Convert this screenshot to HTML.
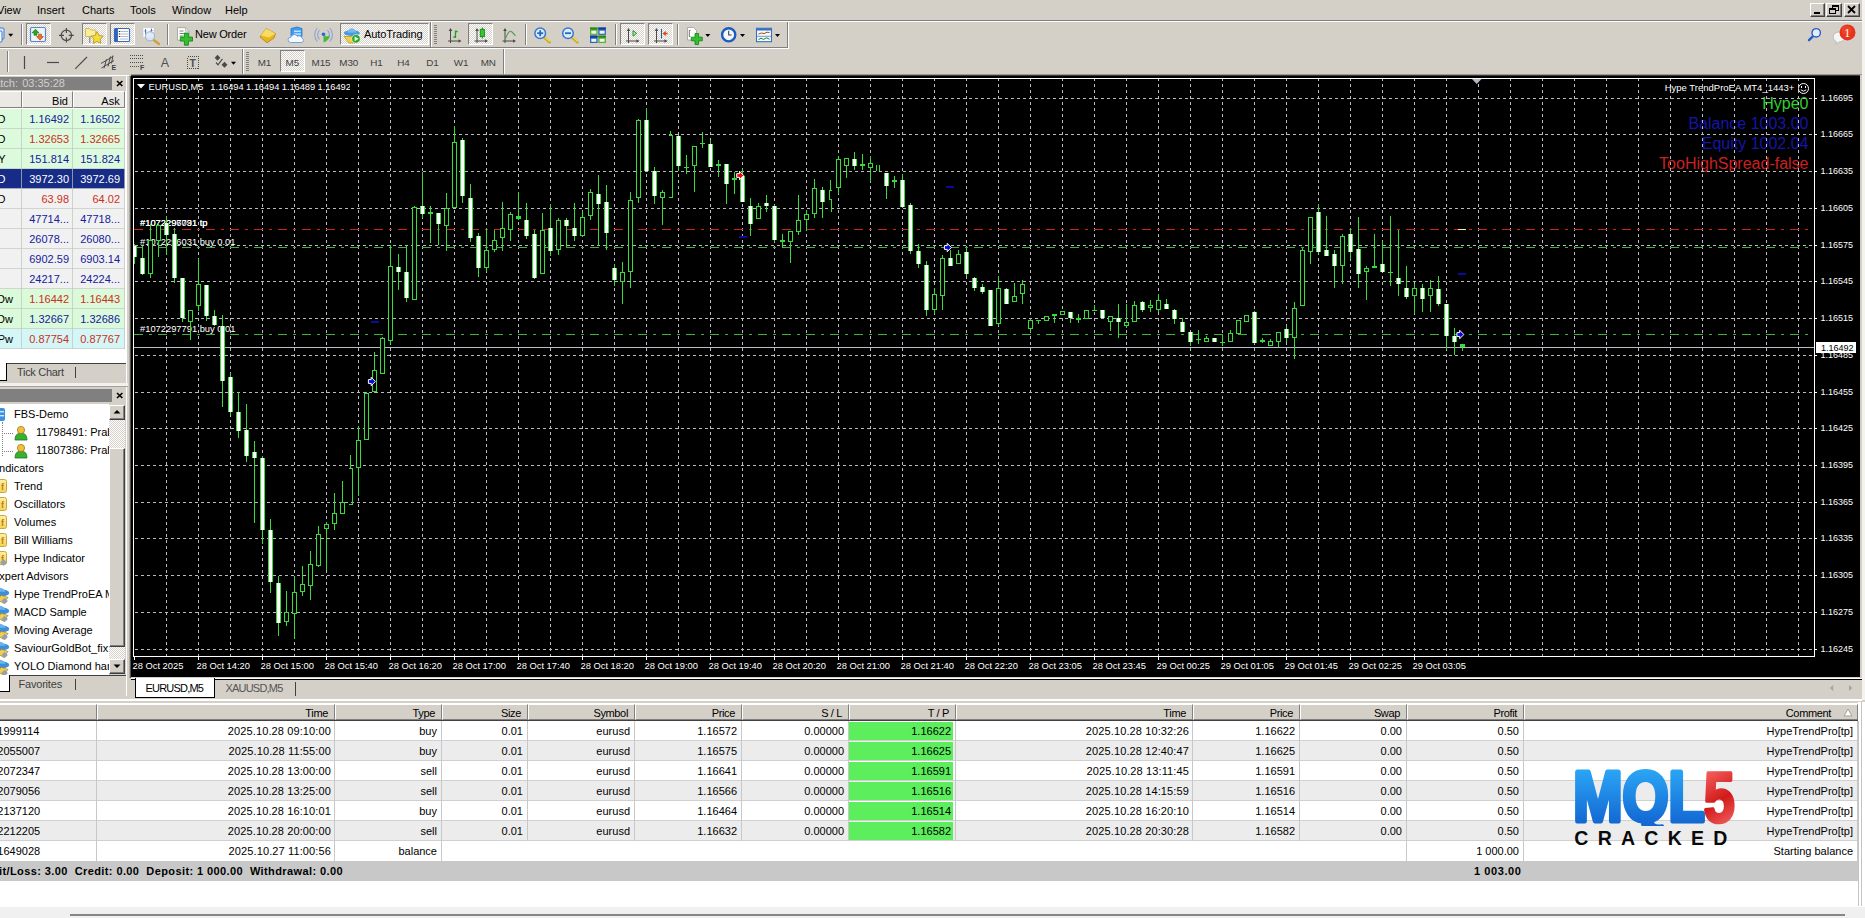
<!DOCTYPE html><html><head><meta charset="utf-8"><title>MetaTrader 4</title><style>

html,body{margin:0;padding:0}
body{width:1865px;height:918px;overflow:hidden;background:#d4d0c8;position:relative;font-family:"Liberation Sans","DejaVu Sans",sans-serif;font-size:11px;color:#000;line-height:13px}
.a{position:absolute}
.t{position:absolute;white-space:pre;line-height:13px;height:13px}
.r{text-align:right}
.vsep{position:absolute;width:1px;background:#808080;box-shadow:1px 0 0 #fff}
.pressed{position:absolute;box-sizing:border-box;border:1px solid;border-color:#808080 #fff #fff #808080;background-color:#d6d2ca;background-image:linear-gradient(45deg,#fff 25%,transparent 25%,transparent 75%,#fff 75%),linear-gradient(45deg,#fff 25%,transparent 25%,transparent 75%,#fff 75%);background-size:2px 2px;background-position:0 0,1px 1px}
.hdr{position:absolute;box-sizing:border-box;background:#ebe9e4;border:1px solid;border-color:#fff #808080 #808080 #fff;height:17px}
.grip{position:absolute;width:3px;border-left:1px dotted #808080;border-right:1px dotted #808080;box-sizing:border-box}
svg{position:absolute;overflow:visible}

</style></head><body>
<div class="a" style="left:0;top:0;width:1865px;height:20px;background:#d4d0c8"></div>
<div class="t" style="left:-3px;top:4px;">View</div>
<div class="t" style="left:37px;top:4px;">Insert</div>
<div class="t" style="left:82px;top:4px;">Charts</div>
<div class="t" style="left:130px;top:4px;">Tools</div>
<div class="t" style="left:172px;top:4px;">Window</div>
<div class="t" style="left:225px;top:4px;">Help</div>
<div class="a" style="left:0;top:20px;width:1862px;height:1px;background:#808080"></div>
<div class="a" style="left:0;top:21px;width:1862px;height:1px;background:#fff"></div>
<div class="a" style="left:1862px;top:0;width:3px;height:700px;background:#f4f3ef"></div>
<div class="a" style="left:1810px;top:3px;width:15px;height:14px;box-sizing:border-box;background:#d4d0c8;border:1px solid;border-color:#fff #404040 #404040 #fff;box-shadow:inset -1px -1px 0 #808080"></div>
<div class="a" style="left:1826px;top:3px;width:16px;height:14px;box-sizing:border-box;background:#d4d0c8;border:1px solid;border-color:#fff #404040 #404040 #fff;box-shadow:inset -1px -1px 0 #808080"></div>
<div class="a" style="left:1844px;top:3px;width:16px;height:14px;box-sizing:border-box;background:#d4d0c8;border:1px solid;border-color:#fff #404040 #404040 #fff;box-shadow:inset -1px -1px 0 #808080"></div>
<svg style="left:1810px;top:3px" width="50" height="14" viewBox="0 0 50 14"><rect x="4" y="9" width="6" height="2" fill="#000"/><rect x="22.5" y="2.5" width="6" height="5" fill="none" stroke="#000"/><rect x="22" y="2" width="7" height="2" fill="#000"/><rect x="19.5" y="5.5" width="6" height="5" fill="#d4d0c8" stroke="#000"/><rect x="19" y="5" width="7" height="2" fill="#000"/><path d="M38 3 L45 10 M45 3 L38 10" stroke="#000" stroke-width="1.8" fill="none"/></svg>
<div class="a" style="left:0;top:47px;width:788px;height:1px;background:#808080"></div>
<div class="a" style="left:0;top:48px;width:789px;height:1px;background:#fff"></div>
<div class="a" style="left:787px;top:22px;width:1px;height:26px;background:#808080"></div>
<div class="a" style="left:788px;top:22px;width:1px;height:27px;background:#fff"></div>
<div class="a" style="left:430px;top:22px;width:1px;height:25px;background:#808080"></div><div class="a" style="left:431px;top:22px;width:1px;height:25px;background:#fff"></div>
<div class="a" style="left:242px;top:49px;width:1px;height:25px;background:#808080"></div><div class="a" style="left:243px;top:49px;width:1px;height:25px;background:#fff"></div>
<div class="a" style="left:503px;top:49px;width:1px;height:25px;background:#808080"></div><div class="a" style="left:504px;top:49px;width:1px;height:25px;background:#fff"></div>
<div class="vsep" style="left:21px;top:24px;height:21px"></div>
<div class="vsep" style="left:167px;top:24px;height:21px"></div>
<div class="vsep" style="left:525px;top:24px;height:21px"></div>
<div class="vsep" style="left:615px;top:24px;height:21px"></div>
<div class="vsep" style="left:677px;top:24px;height:21px"></div>
<div class="vsep" style="left:7px;top:51px;height:21px"></div>
<div class="a" style="left:434px;top:25px;width:3px;height:19px;background:repeating-linear-gradient(#808080 0 1px,transparent 1px 2px)"></div>
<div class="a" style="left:246px;top:52px;width:3px;height:19px;background:repeating-linear-gradient(#808080 0 1px,transparent 1px 2px)"></div>
<div class="pressed" style="left:26px;top:23px;width:25px;height:22px"></div>
<div class="pressed" style="left:82px;top:23px;width:25px;height:22px"></div>
<div class="pressed" style="left:110px;top:23px;width:25px;height:22px"></div>
<div class="pressed" style="left:340px;top:23px;width:89px;height:22px"></div>
<div class="pressed" style="left:468px;top:23px;width:25px;height:22px"></div>
<div class="pressed" style="left:620px;top:23px;width:25px;height:22px"></div>
<div class="pressed" style="left:648px;top:23px;width:25px;height:22px"></div>
<div class="pressed" style="left:280px;top:50px;width:25px;height:22px"></div>
<div class="t" style="left:195px;top:28px;letter-spacing:-.2px">New Order</div>
<div class="t" style="left:364px;top:28px;letter-spacing:-.1px">AutoTrading</div>
<div class="t" style="left:257.7px;top:56.3px;color:#404040;font-size:9.9px;letter-spacing:-.1px">M1</div>
<div class="t" style="left:285.5px;top:56.3px;color:#404040;font-size:9.9px;letter-spacing:-.1px">M5</div>
<div class="t" style="left:311.5px;top:56.3px;color:#404040;font-size:9.9px;letter-spacing:-.1px">M15</div>
<div class="t" style="left:339.3px;top:56.3px;color:#404040;font-size:9.9px;letter-spacing:-.1px">M30</div>
<div class="t" style="left:370.2px;top:56.3px;color:#404040;font-size:9.9px;letter-spacing:-.1px">H1</div>
<div class="t" style="left:397.2px;top:56.3px;color:#404040;font-size:9.9px;letter-spacing:-.1px">H4</div>
<div class="t" style="left:426.3px;top:56.3px;color:#404040;font-size:9.9px;letter-spacing:-.1px">D1</div>
<div class="t" style="left:453.8px;top:56.3px;color:#404040;font-size:9.9px;letter-spacing:-.1px">W1</div>
<div class="t" style="left:480.7px;top:56.3px;color:#404040;font-size:9.9px;letter-spacing:-.1px">MN</div>
<svg style="left:0;top:0" width="800" height="76" viewBox="0 0 800 76"><rect x="-4" y="28" width="8" height="11" rx="1" fill="#dce9fb" stroke="#3c78c8"/><rect x="-6" y="31" width="8" height="11" rx="1" fill="#f4f8ff" stroke="#3c78c8"/><path d="M8.2 33.7 h5 l-2.5 3 z" fill="#000"/><rect x="30.5" y="27.5" width="15" height="14" rx="1.5" fill="#eef3fa" stroke="#5a88cc" stroke-width="1.2"/><path d="M35.5 29.2 l3.4 3.6 h-2 v2.4 h-2.8 v-2.4 h-2 z" fill="#20b020" stroke="#0a7a0a" stroke-width=".7"/><path d="M40 40.2 l3.4 -3.6 h-2 v-2.4 h-2.8 v2.4 h-2 z" fill="#f07030" stroke="#c04010" stroke-width=".7"/><circle cx="66.4" cy="35.3" r="5.2" fill="none" stroke="#4a4a4a" stroke-width="1.2"/><path d="M66.4 28 v5 M66.4 37.6 v5 M59 35.3 h5 M68.8 35.3 h5" stroke="#4a4a4a" stroke-width="1.2"/><path d="M85.5 28.5 h4 l1.2 1.5 h5 v6.5 h-10.2 z" fill="#f8ee9c" stroke="#c8b040" stroke-width=".8"/><path d="M89.8 37.5 v5" stroke="#000" stroke-width="1" stroke-dasharray="1 1"/><path d="M97 31.6 l1.9 3.9 4.3 .6 -3.1 3 .7 4.3 -3.8 -2 -3.8 2 .7 -4.3 -3.1 -3 4.3 -.6 z" fill="#f4dc38" stroke="#b89820" stroke-width=".9"/><rect x="114.5" y="28.5" width="15" height="13" rx="1" fill="#fff" stroke="#3a6cc0" stroke-width="1.2"/><rect x="114.5" y="28.5" width="3.4" height="13" fill="#2f62b8"/><path d="M119.5 31.5 h8.5 M119.5 34 h8.5 M119.5 36.5 h8.5 M119.5 39 h8.5" stroke="#9aa8c0" stroke-width=".8"/><path d="M118.8 31.5 h1 M118.8 34 h1 M118.8 36.5 h1" stroke="#000" stroke-width="1"/><rect x="143" y="27.7" width="11" height="9.6" fill="#fff" stroke="#c0c8d4" stroke-width=".6"/><path d="M145.5 29 v6 M151.5 28.5 v5 M144.5 31 h2 M150.5 30.5 h2" stroke="#4060a0" stroke-width=".8"/><path d="M153 39.5 L159 44" stroke="#d0a030" stroke-width="2.2" stroke-linecap="round"/><circle cx="150" cy="36.2" r="4.6" fill="#dbe9f8" fill-opacity=".85" stroke="#a8b8d0" stroke-width="1.2"/><path d="M177.5 27.7 h8 l3.5 3.5 v9 h-11.5 z" fill="#fff" stroke="#9a9a9a" stroke-width=".8"/><path d="M185.5 27.7 v3.5 h3.5" fill="#e8e8e8" stroke="#9a9a9a" stroke-width=".6"/><path d="M179.5 31 h4 M179.5 33.5 h6 M179.5 36 h4" stroke="#808080" stroke-width="1"/><path d="M184.4 33 h4 v4.1 h4.1 v4 h-4.1 v4.1 h-4 v-4.1 h-4.1 v-4 h4.1 z" fill="#30c030" stroke="#108010" stroke-width=".8"/><path d="M260 37 l6 -8.5 l9.5 5 l-1.5 4.5 l-7 4.8 z" fill="#e8b41c" stroke="#a87810" stroke-width=".7"/><path d="M266 28.5 l9.5 5 l-6.5 4 l-8 -2 z" fill="#f8dc60"/><path d="M291 28.5 l6 -1.5 l5 1.5 v8 h-11 z" fill="#3c9cf0" stroke="#1c6cc8" stroke-width=".7"/><rect x="294" y="30.5" width="7" height="1.6" fill="#bfe0ff"/><rect x="294" y="33.3" width="7" height="1.6" fill="#bfe0ff"/><path d="M290.5 42.5 a2.6 2.6 0 0 1 .4 -5.2 a3.6 3.6 0 0 1 6.6 -1 a3 3 0 0 1 4.6 2 a2.2 2.2 0 0 1 -.5 4.2 z" fill="#f4f8fc" stroke="#6a9ad8" stroke-width=".9"/><path d="M319.5 30 a7 7 0 0 0 0 9.5 M317.3 28 a10 10 0 0 0 0 13.5 M327.5 30 a7 7 0 0 1 0 9.5 M329.8 28 a10 10 0 0 1 0 13.5" stroke="#8aa4d8" stroke-width="1.1" fill="none"/><path d="M323.5 34.5 v8 q5 -1.5 6.5 -7.5 q-3 3 -6.5 -.5" fill="#48b838"/><circle cx="323.5" cy="34.2" r="1.8" fill="#2868d0"/><path d="M344 36.5 l5 6.5 h6 l4.5 -6.5 z" fill="#f0d048" stroke="#b09020" stroke-width=".7"/><ellipse cx="351.8" cy="33" rx="8" ry="3" fill="#4a98e0"/><path d="M347 32.5 q4.8 -8.5 9.6 0 z" fill="#78b8f0"/><circle cx="356" cy="38.8" r="4.3" fill="#28a828" stroke="#fff" stroke-width=".6"/><path d="M354.6 36.4 l4 2.4 l-4 2.4 z" fill="#fff"/><path d="M450.5 30.5 V43.0 M448 41.0 H459.5" stroke="#4a4a4a" stroke-width="1" fill="none"/><path d="M450.5 28.0 l-1.8 3 h3.6 z M461.5 41.0 l-3 -1.8 v3.6 z" fill="#4a4a4a"/><path d="M455.5 30.5 V38 M455.5 31.5 h2.2 M453.3 37 h2.2" stroke="#20a020" stroke-width="1.3" fill="none"/><path d="M477.0 30.5 V43.0 M474.5 41.0 H486.0" stroke="#4a4a4a" stroke-width="1" fill="none"/><path d="M477.0 28.0 l-1.8 3 h3.6 z M488.0 41.0 l-3 -1.8 v3.6 z" fill="#4a4a4a"/><path d="M482.3 27.5 v11" stroke="#108010" stroke-width="1"/><rect x="480.2" y="29.3" width="4.2" height="7.4" fill="#30c830" stroke="#108010" stroke-width=".8"/><path d="M505.0 30.5 V43.0 M502.5 41.0 H514.0" stroke="#4a4a4a" stroke-width="1" fill="none"/><path d="M505.0 28.0 l-1.8 3 h3.6 z M516.0 41.0 l-3 -1.8 v3.6 z" fill="#4a4a4a"/><path d="M505.5 38.5 q3.5 -9.5 6.5 -6.5 t3.5 4" stroke="#50a050" stroke-width="1.1" fill="none"/><path d="M543.7 36.7 L549.7 42.2" stroke="#c8a820" stroke-width="2.6" stroke-linecap="round"/><path d="M544.2 36.400000000000006 L549.7 41.400000000000006" stroke="#f4e050" stroke-width="1.2" stroke-linecap="round"/><circle cx="540.2" cy="33.2" r="5.3" fill="#d8ecfc" stroke="#3b78cc" stroke-width="1.5"/><path d="M537.2 33.2 h6" stroke="#2a68b8" stroke-width="1.8"/><path d="M540.2 30.200000000000003 v6" stroke="#2a68b8" stroke-width="1.8"/><path d="M571.5 36.7 L577.5 42.2" stroke="#c8a820" stroke-width="2.6" stroke-linecap="round"/><path d="M572 36.400000000000006 L577.5 41.400000000000006" stroke="#f4e050" stroke-width="1.2" stroke-linecap="round"/><circle cx="568" cy="33.2" r="5.3" fill="#d8ecfc" stroke="#3b78cc" stroke-width="1.5"/><path d="M565 33.2 h6" stroke="#2a68b8" stroke-width="1.8"/><rect x="590" y="27.5" width="7.6" height="7.4" fill="#58b030"/><rect x="590" y="27.5" width="7.6" height="2" fill="#2e8418"/><rect x="591.3" y="30.7" width="5" height="3" fill="#eef6e8"/><rect x="598.3" y="27.5" width="7.6" height="7.4" fill="#2c68c8"/><rect x="598.3" y="27.5" width="7.6" height="2" fill="#103c98"/><rect x="599.5999999999999" y="30.7" width="5" height="3" fill="#eef6e8"/><rect x="590" y="35.6" width="7.6" height="7.4" fill="#2c68c8"/><rect x="590" y="35.6" width="7.6" height="2" fill="#103c98"/><rect x="591.3" y="38.800000000000004" width="5" height="3" fill="#eef6e8"/><rect x="598.3" y="35.6" width="7.6" height="7.4" fill="#58b030"/><rect x="598.3" y="35.6" width="7.6" height="2" fill="#2e8418"/><rect x="599.5999999999999" y="38.800000000000004" width="5" height="3" fill="#eef6e8"/><path d="M628.5 30.5 V43.0 M626 41.0 H637.5" stroke="#4a4a4a" stroke-width="1" fill="none"/><path d="M628.5 28.0 l-1.8 3 h3.6 z M639.5 41.0 l-3 -1.8 v3.6 z" fill="#4a4a4a"/><path d="M633 30.5 l3.6 2.8 l-3.6 2.8 z" fill="#b8e8b0" stroke="#209020" stroke-width="1"/><path d="M656.5 30.5 V43.0 M654 41.0 H665.5" stroke="#4a4a4a" stroke-width="1" fill="none"/><path d="M656.5 28.0 l-1.8 3 h3.6 z M667.5 41.0 l-3 -1.8 v3.6 z" fill="#4a4a4a"/><path d="M661.5 29 v9.5" stroke="#2060a8" stroke-width="1.1"/><path d="M662.6 33.5 l3.2 -2.4 v1.6 h1.8 v1.6 h-1.8 v1.6 z" fill="#e04810"/><path d="M687.5 27.5 h6 l3 3 v9.5 h-9 z" fill="#fff" stroke="#9a9a9a" stroke-width=".8"/><path d="M690.5 30.5 h-1.2 v6 h1.2" stroke="#606060" fill="none" stroke-width=".9"/><path d="M695 33.5 h3.6 v3.7 h3.7 v3.6 h-3.7 v3.7 h-3.6 v-3.7 h-3.7 v-3.6 h3.7 z" fill="#30c030" stroke="#108010" stroke-width=".8"/><path d="M705.3 34 h5 l-2.5 3 z" fill="#000"/><circle cx="728.7" cy="34.8" r="6.6" fill="#f4f8fc" stroke="#1c5cc0" stroke-width="2.4"/><path d="M728.7 30.8 v4.2 h3" stroke="#404040" stroke-width="1.1" fill="none"/><path d="M740 34 h5 l-2.5 3 z" fill="#000"/><rect x="756.5" y="28.3" width="15" height="13.4" fill="#f4f8ff" stroke="#3a70c4" stroke-width="1.1"/><rect x="756.5" y="28.3" width="15" height="2.2" fill="#3a70c4"/><path d="M758.5 34 l3 -1 l2.5 .6 l3 -1.4 l2.5 .4" stroke="#a05010" stroke-width="1" fill="none"/><path d="M757 36.3 h14" stroke="#3a70c4" stroke-width=".7"/><path d="M758.5 39.6 l2.5 -1.4 l2.5 1.2 l3 -1.6 l3 1.4" stroke="#208020" stroke-width="1" fill="none"/><path d="M775 34 h5 l-2.5 3 z" fill="#000"/><path d="M24.5 56 V69" stroke="#4a4a4a" stroke-width="1.2"/><path d="M47 62.5 H59" stroke="#4a4a4a" stroke-width="1.2"/><path d="M75.2 68.8 L87 57" stroke="#4a4a4a" stroke-width="1.1"/><path d="M101 63.5 L113 56.5 M101.5 68 L114 60.5 M104 68.3 l2.5 -9 M108 66.5 l2.5 -10 M111.5 63.5 l1.5 -8" stroke="#4a4a4a" stroke-width="1" fill="none"/><path d="M130 55.5 H143 M130 58.5 H143 M130 62.5 H143 M130 66.5 H139" stroke="#4a4a4a" stroke-width="1" stroke-dasharray="1 1"/><rect x="187.5" y="56.5" width="11" height="12" fill="none" stroke="#4a4a4a" stroke-width="1" stroke-dasharray="1 1" shape-rendering="crispEdges"/><path d="M217.5 54.8 l2.8 3 l-2.8 3 l-2.8 -3 z M224.5 61.8 l3 3 l-3 3 l-3 -3 z" fill="#4a4a4a"/><path d="M216 62.5 l2 2.3 l4.5 -6" stroke="#4a4a4a" stroke-width="1.2" fill="none"/><path d="M231 61.7 h5 l-2.5 3 z" fill="#000"/></svg>
<div class="t" style="left:111.5px;top:63.5px;font-size:7px;font-weight:bold;color:#404040;line-height:8px;height:8px">E</div>
<div class="t" style="left:140px;top:63.5px;font-size:7px;font-weight:bold;color:#404040;line-height:8px;height:8px">F</div>
<div class="t" style="left:160.8px;top:56px;font-size:12.5px;color:#505050;line-height:14px;height:14px">A</div>
<div class="t" style="left:189.6px;top:56.5px;font-size:10.5px;font-weight:bold;color:#505050">T</div>
<svg style="left:1803px;top:23px" width="62" height="26" viewBox="0 0 62 26"><path d="M9.6 13.6 L6 17.2" stroke="#2a5cc8" stroke-width="2.4" stroke-linecap="round"/><circle cx="13.2" cy="9.8" r="4.2" fill="#e4ecfa" stroke="#2a5cc8" stroke-width="1.4"/><path d="M31 16.5 a6 5 0 1 1 5 2.4 l-3 2.6 l.4 -2.8 q-1.5 -.6 -2.4 -2.2 z" fill="#f6f6f6" stroke="#b8b8b8" stroke-width=".9"/><circle cx="44.5" cy="9.4" r="8" fill="#e8321c"/><circle cx="43.5" cy="7.4" r="5" fill="#f0502c" fill-opacity=".55"/></svg>
<div class="t" style="left:1844.3px;top:26px;color:#fff;font-size:12px;font-family:'Liberation Serif',serif;line-height:14px;height:14px">1</div>
<div class="a" style="left:0;top:77px;width:112px;height:13px;background:#808080"></div>
<div class="t r" style="right:1847px;top:77px;color:#d4d0c8">Market Watch:</div>
<div class="t r" style="right:1800px;top:77px;color:#d4d0c8">03:35:28</div>
<svg style="left:115px;top:79px" width="10" height="9" viewBox="0 0 10 9"><path d="M2 2 L7.4 7 M7.4 2 L2 7" stroke="#000" stroke-width="1.6"/></svg>
<div class="a" style="left:0;top:91px;width:126px;height:272px;background:#fff"></div>
<div class="hdr" style="left:-5px;top:91px;width:27px"></div>
<div class="hdr" style="left:22px;top:91px;width:51px"></div>
<div class="hdr" style="left:73px;top:91px;width:52px"></div>
<div class="t r" style="right:1797px;top:95px;">Bid</div>
<div class="t r" style="right:1745.3px;top:95px;">Ask</div>
<div class="a" style="left:0;top:109px;width:125px;height:20px;background:#dcfadc"></div>
<div class="t r" style="right:1859.5px;top:113px;color:#000">EURUSD</div>
<div class="t r" style="right:1796px;top:113px;color:#14209c">1.16492</div>
<div class="t r" style="right:1745px;top:113px;color:#14209c">1.16502</div>
<div class="a" style="left:0;top:128px;width:125px;height:1px;background:rgba(200,206,200,.8)"></div>
<div class="a" style="left:0;top:129px;width:125px;height:20px;background:#dcfadc"></div>
<div class="t r" style="right:1859.5px;top:133px;color:#000">GBPUSD</div>
<div class="t r" style="right:1796px;top:133px;color:#cc3020">1.32653</div>
<div class="t r" style="right:1745px;top:133px;color:#cc3020">1.32665</div>
<div class="a" style="left:0;top:148px;width:125px;height:1px;background:rgba(200,206,200,.8)"></div>
<div class="a" style="left:0;top:149px;width:125px;height:20px;background:#dcfadc"></div>
<div class="t r" style="right:1859.5px;top:153px;color:#000">USDJPY</div>
<div class="t r" style="right:1796px;top:153px;color:#14209c">151.814</div>
<div class="t r" style="right:1745px;top:153px;color:#14209c">151.824</div>
<div class="a" style="left:0;top:168px;width:125px;height:1px;background:rgba(200,206,200,.8)"></div>
<div class="a" style="left:0;top:169px;width:125px;height:20px;background:#162c86"></div>
<div class="t r" style="right:1859.5px;top:173px;color:#fff">XAUUSD</div>
<div class="t r" style="right:1796px;top:173px;color:#fff">3972.30</div>
<div class="t r" style="right:1745px;top:173px;color:#fff">3972.69</div>
<div class="a" style="left:0;top:188px;width:125px;height:1px;background:rgba(200,206,200,.8)"></div>
<div class="a" style="left:0;top:189px;width:125px;height:20px;background:#f1f1f1"></div>
<div class="t r" style="right:1859.5px;top:193px;color:#000">XBRUSD</div>
<div class="t r" style="right:1796px;top:193px;color:#cc3020">63.98</div>
<div class="t r" style="right:1745px;top:193px;color:#cc3020">64.02</div>
<div class="a" style="left:0;top:208px;width:125px;height:1px;background:rgba(200,206,200,.8)"></div>
<div class="a" style="left:0;top:209px;width:125px;height:20px;background:#f1f1f1"></div>
<div class="t r" style="right:1796px;top:213px;color:#14209c">47714...</div>
<div class="t r" style="right:1745px;top:213px;color:#14209c">47718...</div>
<div class="a" style="left:0;top:228px;width:125px;height:1px;background:rgba(200,206,200,.8)"></div>
<div class="a" style="left:0;top:229px;width:125px;height:20px;background:#f1f1f1"></div>
<div class="t r" style="right:1796px;top:233px;color:#14209c">26078...</div>
<div class="t r" style="right:1745px;top:233px;color:#14209c">26080...</div>
<div class="a" style="left:0;top:248px;width:125px;height:1px;background:rgba(200,206,200,.8)"></div>
<div class="a" style="left:0;top:249px;width:125px;height:20px;background:#f1f1f1"></div>
<div class="t r" style="right:1796px;top:253px;color:#14209c">6902.59</div>
<div class="t r" style="right:1745px;top:253px;color:#14209c">6903.14</div>
<div class="a" style="left:0;top:268px;width:125px;height:1px;background:rgba(200,206,200,.8)"></div>
<div class="a" style="left:0;top:269px;width:125px;height:20px;background:#f1f1f1"></div>
<div class="t r" style="right:1796px;top:273px;color:#14209c">24217...</div>
<div class="t r" style="right:1745px;top:273px;color:#14209c">24224...</div>
<div class="a" style="left:0;top:288px;width:125px;height:1px;background:rgba(200,206,200,.8)"></div>
<div class="a" style="left:0;top:289px;width:125px;height:20px;background:#dafada"></div>
<div class="t r" style="right:1852px;top:293px;color:#000">EURUSDw</div>
<div class="t r" style="right:1796px;top:293px;color:#cc3020">1.16442</div>
<div class="t r" style="right:1745px;top:293px;color:#cc3020">1.16443</div>
<div class="a" style="left:0;top:308px;width:125px;height:1px;background:rgba(200,206,200,.8)"></div>
<div class="a" style="left:0;top:309px;width:125px;height:20px;background:#dafada"></div>
<div class="t r" style="right:1852px;top:313px;color:#000">GBPUSDw</div>
<div class="t r" style="right:1796px;top:313px;color:#14209c">1.32667</div>
<div class="t r" style="right:1745px;top:313px;color:#14209c">1.32686</div>
<div class="a" style="left:0;top:328px;width:125px;height:1px;background:rgba(200,206,200,.8)"></div>
<div class="a" style="left:0;top:329px;width:125px;height:20px;background:#d4f6f6"></div>
<div class="t r" style="right:1852px;top:333px;color:#000">EURGBPw</div>
<div class="t r" style="right:1796px;top:333px;color:#cc3020">0.87754</div>
<div class="t r" style="right:1745px;top:333px;color:#cc3020">0.87767</div>
<div class="a" style="left:0;top:348px;width:125px;height:1px;background:rgba(200,206,200,.8)"></div>
<div class="a" style="left:21px;top:109px;width:1px;height:240px;background:rgba(190,196,190,.7)"></div>
<div class="a" style="left:72px;top:109px;width:1px;height:240px;background:rgba(190,196,190,.7)"></div>
<div class="a" style="left:124px;top:109px;width:1px;height:240px;background:rgba(190,196,190,.7)"></div>
<div class="a" style="left:0;top:363px;width:126px;height:20px;background:#d4d0c8"></div>
<div class="a" style="left:0;top:363px;width:126px;height:1px;background:#404040"></div>
<div class="a" style="left:-4px;top:363px;width:9px;height:17px;background:#fff;border:1px solid #000;border-top:none"></div>
<div class="t" style="left:17px;top:366px;color:#404040;letter-spacing:-.3px">Tick Chart</div>
<div class="a" style="left:75px;top:367px;width:1px;height:11px;background:#404040"></div>
<div class="a" style="left:126px;top:76px;width:1px;height:620px;background:#fff"></div>
<div class="a" style="left:129px;top:76px;width:1px;height:602px;background:#aeaba5"></div><div class="a" style="left:130px;top:76px;width:1px;height:602px;background:#54524f"></div>
<div class="a" style="left:0;top:75px;width:129px;height:1px;background:#fff"></div>
<div class="a" style="left:0;top:383px;width:128px;height:3px;background:#f2f1ee"></div>
<div class="a" style="left:0;top:386px;width:128px;height:1px;background:#a4a29e"></div>
<div class="a" style="left:0;top:389px;width:112px;height:13px;background:#808080"></div>
<svg style="left:115px;top:391px" width="10" height="9" viewBox="0 0 10 9"><path d="M2 2 L7.4 7 M7.4 2 L2 7" stroke="#000" stroke-width="1.6"/></svg>
<div class="a" style="left:0;top:404px;width:109px;height:271px;background:#fff;overflow:hidden" id="nav">
<div class="t" style="left:14px;top:4px">FBS-Demo</div>
<svg style="left:-6px;top:3px" width="14" height="16" viewBox="0 0 14 16"><rect x="0" y="1" width="11" height="13" rx="2" fill="#3c90e0"/><rect x="1" y="4" width="9" height="1.4" fill="#cfe6ff"/><rect x="1" y="8" width="9" height="1.4" fill="#cfe6ff"/></svg>
<div class="t" style="left:36px;top:22px">11798491: Prabhu</div>
<svg style="left:14px;top:21px" width="14" height="16" viewBox="0 0 14 16"><path d="M1 15 q0 -7 6 -7 q6 0 6 7 z" fill="#38b030" stroke="#1c7818" stroke-width=".8"/><circle cx="7" cy="5" r="3.6" fill="#f2c040" stroke="#a87810" stroke-width=".8"/></svg>
<div class="a" style="left:2px;top:29px;width:11px;height:1px;border-top:1px dotted #808080"></div>
<div class="t" style="left:36px;top:40px">11807386: Prabhu</div>
<svg style="left:14px;top:39px" width="14" height="16" viewBox="0 0 14 16"><path d="M1 15 q0 -7 6 -7 q6 0 6 7 z" fill="#38b030" stroke="#1c7818" stroke-width=".8"/><circle cx="7" cy="5" r="3.6" fill="#f2c040" stroke="#a87810" stroke-width=".8"/></svg>
<div class="a" style="left:2px;top:47px;width:11px;height:1px;border-top:1px dotted #808080"></div>
<div class="t" style="left:-4px;top:58px">Indicators</div>
<div class="t" style="left:14px;top:76px">Trend</div>
<div class="a" style="left:-6px;top:75px;width:13px;height:14px;background:linear-gradient(#fbf0a0,#f3d45c);border:1px solid #c8a838;border-radius:2.5px;box-sizing:border-box"></div>
<div class="a" style="left:1px;top:79px;font-size:9px;line-height:9px;color:#c87810;font-weight:bold">f</div>
<div class="t" style="left:14px;top:94px">Oscillators</div>
<div class="a" style="left:-6px;top:93px;width:13px;height:14px;background:linear-gradient(#fbf0a0,#f3d45c);border:1px solid #c8a838;border-radius:2.5px;box-sizing:border-box"></div>
<div class="a" style="left:1px;top:97px;font-size:9px;line-height:9px;color:#c87810;font-weight:bold">f</div>
<div class="t" style="left:14px;top:112px">Volumes</div>
<div class="a" style="left:-6px;top:111px;width:13px;height:14px;background:linear-gradient(#fbf0a0,#f3d45c);border:1px solid #c8a838;border-radius:2.5px;box-sizing:border-box"></div>
<div class="a" style="left:1px;top:115px;font-size:9px;line-height:9px;color:#c87810;font-weight:bold">f</div>
<div class="t" style="left:14px;top:130px">Bill Williams</div>
<div class="a" style="left:-6px;top:129px;width:13px;height:14px;background:linear-gradient(#fbf0a0,#f3d45c);border:1px solid #c8a838;border-radius:2.5px;box-sizing:border-box"></div>
<div class="a" style="left:1px;top:133px;font-size:9px;line-height:9px;color:#c87810;font-weight:bold">f</div>
<div class="t" style="left:14px;top:148px">Hype Indicator</div>
<div class="a" style="left:-6px;top:147px;width:13px;height:14px;background:linear-gradient(#fbf0a0,#f3d45c);border:1px solid #c8a838;border-radius:2.5px;box-sizing:border-box"></div>
<div class="a" style="left:1px;top:151px;font-size:9px;line-height:9px;color:#c87810;font-weight:bold">f</div>
<div class="a" style="left:1px;top:156px;width:5px;height:5px;background:#9aa0a8;transform:rotate(45deg)"></div>
<div class="t" style="left:-8px;top:166px">Expert Advisors</div>
<div class="t" style="left:14px;top:184px">Hype TrendProEA MT4</div>
<svg style="left:-8.5px;top:182px" width="20.7" height="18.4" viewBox="0 0 18 16"><ellipse cx="7" cy="6" rx="8" ry="3.2" fill="#3f8fd8"/><path d="M2 5 q5 -7 10 0 z" fill="#69b4f0"/><path d="M8 8 l6 2 l-4 5 l-5 -3 z" fill="#f0d050" stroke="#a08020" stroke-width=".6"/><rect x="9" y="11" width="4" height="4" fill="#9aa0a8" transform="rotate(45 11 13)"/></svg>
<div class="t" style="left:14px;top:202px">MACD Sample</div>
<svg style="left:-8.5px;top:200px" width="20.7" height="18.4" viewBox="0 0 18 16"><ellipse cx="7" cy="6" rx="8" ry="3.2" fill="#3f8fd8"/><path d="M2 5 q5 -7 10 0 z" fill="#69b4f0"/><path d="M8 8 l6 2 l-4 5 l-5 -3 z" fill="#f0d050" stroke="#a08020" stroke-width=".6"/><rect x="9" y="11" width="4" height="4" fill="#9aa0a8" transform="rotate(45 11 13)"/></svg>
<div class="t" style="left:14px;top:220px">Moving Average</div>
<svg style="left:-8.5px;top:218px" width="20.7" height="18.4" viewBox="0 0 18 16"><ellipse cx="7" cy="6" rx="8" ry="3.2" fill="#3f8fd8"/><path d="M2 5 q5 -7 10 0 z" fill="#69b4f0"/><path d="M8 8 l6 2 l-4 5 l-5 -3 z" fill="#f0d050" stroke="#a08020" stroke-width=".6"/><rect x="9" y="11" width="4" height="4" fill="#9aa0a8" transform="rotate(45 11 13)"/></svg>
<div class="t" style="left:14px;top:238px">SaviourGoldBot_fix</div>
<svg style="left:-8.5px;top:236px" width="20.7" height="18.4" viewBox="0 0 18 16"><ellipse cx="7" cy="6" rx="8" ry="3.2" fill="#3f8fd8"/><path d="M2 5 q5 -7 10 0 z" fill="#69b4f0"/><path d="M8 8 l6 2 l-4 5 l-5 -3 z" fill="#f0d050" stroke="#a08020" stroke-width=".6"/><rect x="9" y="11" width="4" height="4" fill="#9aa0a8" transform="rotate(45 11 13)"/></svg>
<div class="t" style="left:14px;top:256px">YOLO Diamond hands</div>
<svg style="left:-8.5px;top:254px" width="20.7" height="18.4" viewBox="0 0 18 16"><ellipse cx="7" cy="6" rx="8" ry="3.2" fill="#3f8fd8"/><path d="M2 5 q5 -7 10 0 z" fill="#69b4f0"/><path d="M8 8 l6 2 l-4 5 l-5 -3 z" fill="#f0d050" stroke="#a08020" stroke-width=".6"/><rect x="9" y="11" width="4" height="4" fill="#9aa0a8" transform="rotate(45 11 13)"/></svg>
<div class="a" style="left:2px;top:18px;width:1px;height:34px;border-left:1px dotted #808080"></div>
</div>
<div class="pressed" style="left:109px;top:405px;width:16px;height:269px;border:none"></div>
<div class="a" style="left:109px;top:405px;width:16px;height:15px;box-sizing:border-box;background:#d4d0c8;border:1px solid;border-color:#fff #404040 #404040 #fff;box-shadow:inset -1px -1px 0 #808080"></div>
<svg style="left:109.5px;top:405px" width="15" height="15" viewBox="0 0 15 15"><path d="M3.5 8.5 L7 5 L10.5 8.5 Z" fill="#000"/></svg>
<div class="a" style="left:109px;top:659px;width:16px;height:15px;box-sizing:border-box;background:#d4d0c8;border:1px solid;border-color:#fff #404040 #404040 #fff;box-shadow:inset -1px -1px 0 #808080"></div>
<svg style="left:109.5px;top:659px" width="15" height="15" viewBox="0 0 15 15"><path d="M3.5 5.5 L7 9 L10.5 5.5 Z" fill="#000"/></svg>
<div class="a" style="left:109px;top:448px;width:16px;height:199px;box-sizing:border-box;background:#d4d0c8;border:1px solid;border-color:#fff #404040 #404040 #fff;box-shadow:inset -1px -1px 0 #808080"></div>
<div class="a" style="left:0;top:675px;width:126px;height:1px;background:#404040"></div>
<div class="a" style="left:-4px;top:675px;width:12px;height:16px;background:#fff;border:1px solid #000;border-top:none"></div>
<div class="t" style="left:18.5px;top:678px;color:#404040;letter-spacing:-.2px">Favorites</div>
<div class="a" style="left:75px;top:679px;width:1px;height:11px;background:#404040"></div>
<svg style="left:0;top:0" width="1865" height="918" viewBox="0 0 1865 918" shape-rendering="crispEdges" font-family="Liberation Sans, sans-serif" font-size="9.33">
<rect x="131" y="74" width="1731" height="1" fill="#9a9892"/>
<rect x="131" y="75" width="1729" height="602" fill="#000"/><rect x="131" y="75" width="1729" height="1" fill="#3a3936"/>
<g font-size="16" text-anchor="end" shape-rendering="auto">
<text x="1808.5" y="109" fill="#32cd32">Hype0</text>
<text x="1808.5" y="129" fill="#1515a8">Balance 1003.00</text>
<text x="1808.5" y="149" fill="#1515a8">Equity 1002.04</text>
<text x="1808.5" y="169" fill="#cc2020">TooHighSpread-false</text>
</g>
<path d="M135 98.5 H1814 M135 134.5 H1814 M135 171.5 H1814 M135 208.5 H1814 M135 245.5 H1814 M135 281.5 H1814 M135 318.5 H1814 M135 355.5 H1814 M135 392.5 H1814 M135 428.5 H1814 M135 465.5 H1814 M135 502.5 H1814 M135 538.5 H1814 M135 575.5 H1814 M135 612.5 H1814 M135 649.5 H1814 M166.5 78 V656 M198.5 78 V656 M230.5 78 V656 M262.5 78 V656 M294.5 78 V656 M326.5 78 V656 M358.5 78 V656 M390.5 78 V656 M422.5 78 V656 M454.5 78 V656 M486.5 78 V656 M518.5 78 V656 M550.5 78 V656 M582.5 78 V656 M614.5 78 V656 M646.5 78 V656 M678.5 78 V656 M710.5 78 V656 M742.5 78 V656 M774.5 78 V656 M806.5 78 V656 M838.5 78 V656 M870.5 78 V656 M902.5 78 V656 M934.5 78 V656 M966.5 78 V656 M998.5 78 V656 M1030.5 78 V656 M1062.5 78 V656 M1094.5 78 V656 M1126.5 78 V656 M1158.5 78 V656 M1190.5 78 V656 M1222.5 78 V656 M1254.5 78 V656 M1286.5 78 V656 M1318.5 78 V656 M1350.5 78 V656 M1382.5 78 V656 M1414.5 78 V656 M1446.5 78 V656 M1478.5 78 V656 M1510.5 78 V656 M1542.5 78 V656 M1574.5 78 V656 M1606.5 78 V656 M1638.5 78 V656 M1670.5 78 V656 M1702.5 78 V656 M1734.5 78 V656 M1766.5 78 V656 M1798.5 78 V656" stroke="#bababf" stroke-width="1" stroke-dasharray="3 3" fill="none"/>
<g fill="#fff">
<text x="140" y="226">#1072296031 tp</text><text x="140" y="226">#1072297791 tp</text>
<text x="140" y="244.5">#1072296031 buy 0.01</text>
<text x="140" y="331.5">#1072297791 buy 0.01</text>
</g>
<path d="M134 229.5 H1808" stroke="#d42020" stroke-dasharray="9 6 3 6" fill="none"/>
<path d="M134 247.5 H1808" stroke="#3cb43c" stroke-dasharray="9 6 3 6" fill="none"/>
<path d="M134 334.5 H1808" stroke="#3cb43c" stroke-dasharray="9 6 3 6" fill="none"/>
<path d="M134 347.5 H1814" stroke="#b8bcc4" fill="none"/>
<rect x="371" y="321" width="8" height="2" fill="#0a0aa0"/>
<rect x="739" y="236" width="8" height="2" fill="#0a0aa0"/>
<rect x="946" y="186" width="8" height="2" fill="#0a0aa0"/>
<rect x="1458" y="273" width="8" height="2" fill="#0a0aa0"/>
<rect x="1458" y="229" width="8" height="1" fill="#f4f0a0"/>
<rect x="134" y="244" width="1" height="2" fill="#38dc38"/><rect x="134" y="257" width="1" height="7" fill="#38dc38"/><rect x="134" y="246" width="3" height="11" fill="#fff"/><rect x="136" y="246" width="1" height="11" fill="#38dc38"/>
<rect x="142" y="246" width="1" height="12" fill="#38dc38"/><rect x="142" y="274" width="1" height="1" fill="#38dc38"/><rect x="140" y="258" width="5" height="16" fill="#38dc38"/><rect x="141" y="258" width="3" height="16" fill="#fff"/>
<rect x="150" y="224" width="1" height="16" fill="#38dc38"/><rect x="150" y="274" width="1" height="4" fill="#38dc38"/><rect x="148.5" y="240.5" width="4" height="33" fill="#000" stroke="#38dc38"/>
<rect x="158" y="223" width="1" height="2" fill="#38dc38"/><rect x="158" y="241" width="1" height="16" fill="#38dc38"/><rect x="156.5" y="225.5" width="4" height="15" fill="#000" stroke="#38dc38"/>
<rect x="166" y="216" width="1" height="7" fill="#38dc38"/><rect x="166" y="235" width="1" height="20" fill="#38dc38"/><rect x="164" y="223" width="5" height="12" fill="#38dc38"/><rect x="165" y="223" width="3" height="12" fill="#fff"/>
<rect x="174" y="228" width="1" height="6" fill="#38dc38"/><rect x="174" y="278" width="1" height="5" fill="#38dc38"/><rect x="172" y="234" width="5" height="44" fill="#38dc38"/><rect x="173" y="234" width="3" height="44" fill="#fff"/>
<rect x="182" y="318" width="1" height="4" fill="#38dc38"/><rect x="180" y="278" width="5" height="40" fill="#38dc38"/><rect x="181" y="278" width="3" height="40" fill="#fff"/>
<rect x="190" y="322" width="1" height="18" fill="#38dc38"/><rect x="188.5" y="310.5" width="4" height="11" fill="#000" stroke="#38dc38"/>
<rect x="198" y="259" width="1" height="25" fill="#38dc38"/><rect x="198" y="306" width="1" height="5" fill="#38dc38"/><rect x="196.5" y="284.5" width="4" height="21" fill="#000" stroke="#38dc38"/>
<rect x="206" y="316" width="1" height="5" fill="#38dc38"/><rect x="204" y="285" width="5" height="31" fill="#38dc38"/><rect x="205" y="285" width="3" height="31" fill="#fff"/>
<rect x="214" y="310" width="1" height="6" fill="#38dc38"/><rect x="214" y="325" width="1" height="1" fill="#38dc38"/><rect x="212" y="316" width="5" height="9" fill="#38dc38"/><rect x="213" y="316" width="3" height="9" fill="#fff"/>
<rect x="222" y="315" width="1" height="11" fill="#38dc38"/><rect x="222" y="381" width="1" height="26" fill="#38dc38"/><rect x="220" y="326" width="5" height="55" fill="#38dc38"/><rect x="221" y="326" width="3" height="55" fill="#fff"/>
<rect x="230" y="373" width="1" height="4" fill="#38dc38"/><rect x="230" y="412" width="1" height="3" fill="#38dc38"/><rect x="228" y="377" width="5" height="35" fill="#38dc38"/><rect x="229" y="377" width="3" height="35" fill="#fff"/>
<rect x="238" y="392" width="1" height="20" fill="#38dc38"/><rect x="238" y="431" width="1" height="7" fill="#38dc38"/><rect x="236" y="412" width="5" height="19" fill="#38dc38"/><rect x="237" y="412" width="3" height="19" fill="#fff"/>
<rect x="246" y="404" width="1" height="26" fill="#38dc38"/><rect x="246" y="456" width="1" height="6" fill="#38dc38"/><rect x="244" y="430" width="5" height="26" fill="#38dc38"/><rect x="245" y="430" width="3" height="26" fill="#fff"/>
<rect x="254" y="441" width="1" height="11" fill="#38dc38"/><rect x="254" y="458" width="1" height="65" fill="#38dc38"/><rect x="252" y="452" width="5" height="6" fill="#38dc38"/><rect x="253" y="452" width="3" height="6" fill="#fff"/>
<rect x="262" y="456" width="1" height="2" fill="#38dc38"/><rect x="262" y="530" width="1" height="14" fill="#38dc38"/><rect x="260" y="458" width="5" height="72" fill="#38dc38"/><rect x="261" y="458" width="3" height="72" fill="#fff"/>
<rect x="270" y="519" width="1" height="11" fill="#38dc38"/><rect x="270" y="582" width="1" height="11" fill="#38dc38"/><rect x="268" y="530" width="5" height="52" fill="#38dc38"/><rect x="269" y="530" width="3" height="52" fill="#fff"/>
<rect x="278" y="576" width="1" height="7" fill="#38dc38"/><rect x="278" y="623" width="1" height="13" fill="#38dc38"/><rect x="276" y="583" width="5" height="40" fill="#38dc38"/><rect x="277" y="583" width="3" height="40" fill="#fff"/>
<rect x="286" y="591" width="1" height="21" fill="#38dc38"/><rect x="286" y="622" width="1" height="4" fill="#38dc38"/><rect x="284.5" y="612.5" width="4" height="9" fill="#000" stroke="#38dc38"/>
<rect x="294" y="577" width="1" height="15" fill="#38dc38"/><rect x="294" y="614" width="1" height="25" fill="#38dc38"/><rect x="292.5" y="592.5" width="4" height="21" fill="#000" stroke="#38dc38"/>
<rect x="302" y="566" width="1" height="18" fill="#38dc38"/><rect x="302" y="592" width="1" height="4" fill="#38dc38"/><rect x="300.5" y="584.5" width="4" height="7" fill="#000" stroke="#38dc38"/>
<rect x="310" y="551" width="1" height="13" fill="#38dc38"/><rect x="310" y="586" width="1" height="14" fill="#38dc38"/><rect x="308.5" y="564.5" width="4" height="21" fill="#000" stroke="#38dc38"/>
<rect x="318" y="526" width="1" height="8" fill="#38dc38"/><rect x="318" y="566" width="1" height="1" fill="#38dc38"/><rect x="316.5" y="534.5" width="4" height="31" fill="#000" stroke="#38dc38"/>
<rect x="326" y="522" width="1" height="2" fill="#38dc38"/><rect x="326" y="529" width="1" height="41" fill="#38dc38"/><rect x="324.5" y="524.5" width="4" height="4" fill="#000" stroke="#38dc38"/>
<rect x="334" y="493" width="1" height="20" fill="#38dc38"/><rect x="334" y="524" width="1" height="6" fill="#38dc38"/><rect x="332.5" y="513.5" width="4" height="10" fill="#000" stroke="#38dc38"/>
<rect x="342" y="481" width="1" height="21" fill="#38dc38"/><rect x="340.5" y="502.5" width="4" height="11" fill="#000" stroke="#38dc38"/>
<rect x="350" y="455" width="1" height="13" fill="#38dc38"/><rect x="352" y="468" width="1" height="37" fill="#38dc38"/><rect x="349" y="468" width="3" height="1" fill="#38dc38"/><rect x="349" y="504" width="3" height="1" fill="#38dc38"/>
<rect x="358" y="426" width="1" height="14" fill="#38dc38"/><rect x="358" y="468" width="1" height="28" fill="#38dc38"/><rect x="356.5" y="440.5" width="4" height="27" fill="#000" stroke="#38dc38"/>
<rect x="366" y="392" width="1" height="1" fill="#38dc38"/><rect x="364.5" y="393.5" width="4" height="46" fill="#000" stroke="#38dc38"/>
<rect x="374" y="352" width="1" height="18" fill="#38dc38"/><rect x="374" y="392" width="1" height="1" fill="#38dc38"/><rect x="372.5" y="370.5" width="4" height="21" fill="#000" stroke="#38dc38"/>
<rect x="382" y="337" width="1" height="1" fill="#38dc38"/><rect x="380.5" y="338.5" width="4" height="35" fill="#000" stroke="#38dc38"/>
<rect x="390" y="245" width="1" height="21" fill="#38dc38"/><rect x="390" y="341" width="1" height="3" fill="#38dc38"/><rect x="388.5" y="266.5" width="4" height="74" fill="#000" stroke="#38dc38"/>
<rect x="398" y="254" width="1" height="13" fill="#38dc38"/><rect x="398" y="272" width="1" height="18" fill="#38dc38"/><rect x="396" y="267" width="5" height="5" fill="#38dc38"/><rect x="397" y="267" width="3" height="5" fill="#fff"/>
<rect x="406" y="246" width="1" height="26" fill="#38dc38"/><rect x="406" y="298" width="1" height="4" fill="#38dc38"/><rect x="404" y="272" width="5" height="26" fill="#38dc38"/><rect x="405" y="272" width="3" height="26" fill="#fff"/>
<rect x="414" y="206" width="1" height="1" fill="#38dc38"/><rect x="412.5" y="207.5" width="4" height="92" fill="#000" stroke="#38dc38"/>
<rect x="422" y="172" width="1" height="34" fill="#38dc38"/><rect x="422" y="214" width="1" height="4" fill="#38dc38"/><rect x="420" y="206" width="5" height="8" fill="#38dc38"/><rect x="421" y="206" width="3" height="8" fill="#fff"/>
<rect x="430" y="206" width="1" height="37" fill="#38dc38"/><rect x="428" y="212" width="5" height="2" fill="#38dc38"/>
<rect x="438" y="224" width="1" height="21" fill="#38dc38"/><rect x="436" y="213" width="5" height="11" fill="#38dc38"/><rect x="437" y="213" width="3" height="11" fill="#fff"/>
<rect x="446" y="193" width="1" height="15" fill="#38dc38"/><rect x="446" y="226" width="1" height="25" fill="#38dc38"/><rect x="444.5" y="208.5" width="4" height="17" fill="#000" stroke="#38dc38"/>
<rect x="454" y="126" width="1" height="16" fill="#38dc38"/><rect x="452.5" y="142.5" width="4" height="65" fill="#000" stroke="#38dc38"/>
<rect x="462" y="138" width="1" height="2" fill="#38dc38"/><rect x="462" y="196" width="1" height="7" fill="#38dc38"/><rect x="460" y="140" width="5" height="56" fill="#38dc38"/><rect x="461" y="140" width="3" height="56" fill="#fff"/>
<rect x="470" y="184" width="1" height="14" fill="#38dc38"/><rect x="470" y="238" width="1" height="4" fill="#38dc38"/><rect x="468" y="198" width="5" height="40" fill="#38dc38"/><rect x="469" y="198" width="3" height="40" fill="#fff"/>
<rect x="478" y="233" width="1" height="3" fill="#38dc38"/><rect x="478" y="268" width="1" height="9" fill="#38dc38"/><rect x="476" y="236" width="5" height="32" fill="#38dc38"/><rect x="477" y="236" width="3" height="32" fill="#fff"/>
<rect x="486" y="228" width="1" height="22" fill="#38dc38"/><rect x="486" y="268" width="1" height="4" fill="#38dc38"/><rect x="484.5" y="250.5" width="4" height="17" fill="#000" stroke="#38dc38"/>
<rect x="494" y="230" width="1" height="10" fill="#38dc38"/><rect x="494" y="250" width="1" height="2" fill="#38dc38"/><rect x="492.5" y="240.5" width="4" height="9" fill="#000" stroke="#38dc38"/>
<rect x="502" y="202" width="1" height="26" fill="#38dc38"/><rect x="502" y="238" width="1" height="13" fill="#38dc38"/><rect x="500.5" y="228.5" width="4" height="9" fill="#000" stroke="#38dc38"/>
<rect x="510" y="212" width="1" height="2" fill="#38dc38"/><rect x="510" y="230" width="1" height="11" fill="#38dc38"/><rect x="508.5" y="214.5" width="4" height="15" fill="#000" stroke="#38dc38"/>
<rect x="518" y="192" width="1" height="28" fill="#38dc38"/><rect x="516" y="216" width="5" height="3" fill="#38dc38"/>
<rect x="526" y="203" width="1" height="17" fill="#38dc38"/><rect x="526" y="236" width="1" height="3" fill="#38dc38"/><rect x="524" y="220" width="5" height="16" fill="#38dc38"/><rect x="525" y="220" width="3" height="16" fill="#fff"/>
<rect x="534" y="230" width="1" height="4" fill="#38dc38"/><rect x="534" y="278" width="1" height="1" fill="#38dc38"/><rect x="532" y="234" width="5" height="44" fill="#38dc38"/><rect x="533" y="234" width="3" height="44" fill="#fff"/>
<rect x="542" y="213" width="1" height="17" fill="#38dc38"/><rect x="540.5" y="230.5" width="4" height="43" fill="#000" stroke="#38dc38"/>
<rect x="550" y="204" width="1" height="24" fill="#38dc38"/><rect x="550" y="251" width="1" height="5" fill="#38dc38"/><rect x="548" y="228" width="5" height="23" fill="#38dc38"/><rect x="549" y="228" width="3" height="23" fill="#fff"/>
<rect x="558" y="218" width="1" height="2" fill="#38dc38"/><rect x="558" y="250" width="1" height="5" fill="#38dc38"/><rect x="556.5" y="220.5" width="4" height="29" fill="#000" stroke="#38dc38"/>
<rect x="566" y="218" width="1" height="2" fill="#38dc38"/><rect x="566" y="226" width="1" height="21" fill="#38dc38"/><rect x="564" y="220" width="5" height="6" fill="#38dc38"/><rect x="565" y="220" width="3" height="6" fill="#fff"/>
<rect x="574" y="203" width="1" height="25" fill="#38dc38"/><rect x="574" y="236" width="1" height="5" fill="#38dc38"/><rect x="572" y="228" width="5" height="8" fill="#38dc38"/><rect x="573" y="228" width="3" height="8" fill="#fff"/>
<rect x="582" y="211" width="1" height="6" fill="#38dc38"/><rect x="582" y="236" width="1" height="1" fill="#38dc38"/><rect x="580.5" y="217.5" width="4" height="18" fill="#000" stroke="#38dc38"/>
<rect x="590" y="189" width="1" height="3" fill="#38dc38"/><rect x="590" y="216" width="1" height="4" fill="#38dc38"/><rect x="588.5" y="192.5" width="4" height="23" fill="#000" stroke="#38dc38"/>
<rect x="598" y="175" width="1" height="19" fill="#38dc38"/><rect x="598" y="204" width="1" height="42" fill="#38dc38"/><rect x="596" y="194" width="5" height="10" fill="#38dc38"/><rect x="597" y="194" width="3" height="10" fill="#fff"/>
<rect x="606" y="185" width="1" height="17" fill="#38dc38"/><rect x="606" y="233" width="1" height="17" fill="#38dc38"/><rect x="604" y="202" width="5" height="31" fill="#38dc38"/><rect x="605" y="202" width="3" height="31" fill="#fff"/>
<rect x="614" y="264" width="1" height="4" fill="#38dc38"/><rect x="614" y="280" width="1" height="6" fill="#38dc38"/><rect x="612" y="268" width="5" height="12" fill="#38dc38"/><rect x="613" y="268" width="3" height="12" fill="#fff"/>
<rect x="622" y="262" width="1" height="10" fill="#38dc38"/><rect x="622" y="282" width="1" height="22" fill="#38dc38"/><rect x="620.5" y="272.5" width="4" height="9" fill="#000" stroke="#38dc38"/>
<rect x="630" y="192" width="1" height="8" fill="#38dc38"/><rect x="630" y="272" width="1" height="16" fill="#38dc38"/><rect x="628.5" y="200.5" width="4" height="71" fill="#000" stroke="#38dc38"/>
<rect x="638" y="119" width="1" height="1" fill="#38dc38"/><rect x="638" y="198" width="1" height="5" fill="#38dc38"/><rect x="636.5" y="120.5" width="4" height="77" fill="#000" stroke="#38dc38"/>
<rect x="646" y="108" width="1" height="12" fill="#38dc38"/><rect x="644" y="120" width="5" height="51" fill="#38dc38"/><rect x="645" y="120" width="3" height="51" fill="#fff"/>
<rect x="654" y="167" width="1" height="4" fill="#38dc38"/><rect x="654" y="196" width="1" height="8" fill="#38dc38"/><rect x="652" y="171" width="5" height="25" fill="#38dc38"/><rect x="653" y="171" width="3" height="25" fill="#fff"/>
<rect x="662" y="190" width="1" height="2" fill="#38dc38"/><rect x="662" y="198" width="1" height="27" fill="#38dc38"/><rect x="660.5" y="192.5" width="4" height="5" fill="#000" stroke="#38dc38"/>
<rect x="670" y="131" width="1" height="4" fill="#38dc38"/><rect x="672" y="135" width="1" height="63" fill="#38dc38"/><rect x="669" y="135" width="3" height="1" fill="#38dc38"/><rect x="669" y="197" width="3" height="1" fill="#38dc38"/>
<rect x="678" y="135" width="1" height="1" fill="#38dc38"/><rect x="678" y="166" width="1" height="5" fill="#38dc38"/><rect x="676" y="136" width="5" height="30" fill="#38dc38"/><rect x="677" y="136" width="3" height="30" fill="#fff"/>
<rect x="686" y="155" width="1" height="19" fill="#38dc38"/><rect x="684" y="167" width="5" height="1" fill="#38dc38"/>
<rect x="694" y="166" width="1" height="26" fill="#38dc38"/><rect x="692.5" y="146.5" width="4" height="19" fill="#000" stroke="#38dc38"/>
<rect x="702" y="132" width="1" height="16" fill="#38dc38"/><rect x="700" y="143" width="5" height="1" fill="#38dc38"/>
<rect x="710" y="140" width="1" height="4" fill="#38dc38"/><rect x="708" y="144" width="5" height="23" fill="#38dc38"/><rect x="709" y="144" width="3" height="23" fill="#fff"/>
<rect x="718" y="160" width="1" height="17" fill="#38dc38"/><rect x="716" y="164" width="5" height="2" fill="#38dc38"/>
<rect x="726" y="184" width="1" height="20" fill="#38dc38"/><rect x="724" y="164" width="5" height="20" fill="#38dc38"/><rect x="725" y="164" width="3" height="20" fill="#fff"/>
<rect x="734" y="172" width="1" height="22" fill="#38dc38"/><rect x="732" y="178" width="5" height="2" fill="#38dc38"/>
<rect x="742" y="169" width="1" height="7" fill="#38dc38"/><rect x="740" y="176" width="5" height="26" fill="#38dc38"/><rect x="741" y="176" width="3" height="26" fill="#fff"/>
<rect x="750" y="198" width="1" height="8" fill="#38dc38"/><rect x="750" y="224" width="1" height="12" fill="#38dc38"/><rect x="748" y="206" width="5" height="18" fill="#38dc38"/><rect x="749" y="206" width="3" height="18" fill="#fff"/>
<rect x="758" y="203" width="1" height="3" fill="#38dc38"/><rect x="756.5" y="206.5" width="4" height="12" fill="#000" stroke="#38dc38"/>
<rect x="766" y="195" width="1" height="8" fill="#38dc38"/><rect x="766" y="206" width="1" height="6" fill="#38dc38"/><rect x="764" y="203" width="5" height="3" fill="#38dc38"/><rect x="765" y="203" width="3" height="3" fill="#fff"/>
<rect x="774" y="205" width="1" height="1" fill="#38dc38"/><rect x="774" y="240" width="1" height="2" fill="#38dc38"/><rect x="772" y="206" width="5" height="34" fill="#38dc38"/><rect x="773" y="206" width="3" height="34" fill="#fff"/>
<rect x="782" y="234" width="1" height="14" fill="#38dc38"/><rect x="780" y="240" width="5" height="2" fill="#38dc38"/>
<rect x="790" y="242" width="1" height="21" fill="#38dc38"/><rect x="788.5" y="231.5" width="4" height="10" fill="#000" stroke="#38dc38"/>
<rect x="798" y="195" width="1" height="25" fill="#38dc38"/><rect x="798" y="232" width="1" height="3" fill="#38dc38"/><rect x="796.5" y="220.5" width="4" height="11" fill="#000" stroke="#38dc38"/>
<rect x="806" y="210" width="1" height="4" fill="#38dc38"/><rect x="806" y="220" width="1" height="11" fill="#38dc38"/><rect x="804.5" y="214.5" width="4" height="5" fill="#000" stroke="#38dc38"/>
<rect x="814" y="179" width="1" height="9" fill="#38dc38"/><rect x="814" y="214" width="1" height="4" fill="#38dc38"/><rect x="812.5" y="188.5" width="4" height="25" fill="#000" stroke="#38dc38"/>
<rect x="822" y="187" width="1" height="3" fill="#38dc38"/><rect x="822" y="202" width="1" height="16" fill="#38dc38"/><rect x="820" y="190" width="5" height="12" fill="#38dc38"/><rect x="821" y="190" width="3" height="12" fill="#fff"/>
<rect x="830" y="180" width="1" height="10" fill="#38dc38"/><rect x="831" y="200" width="1" height="12" fill="#38dc38"/><rect x="829" y="190" width="1" height="10" fill="#38dc38"/><rect x="829" y="190" width="3" height="1" fill="#38dc38"/><rect x="829" y="199" width="3" height="1" fill="#38dc38"/>
<rect x="838" y="156" width="1" height="3" fill="#38dc38"/><rect x="838" y="188" width="1" height="6" fill="#38dc38"/><rect x="836.5" y="159.5" width="4" height="28" fill="#000" stroke="#38dc38"/>
<rect x="846" y="166" width="1" height="12" fill="#38dc38"/><rect x="844.5" y="158.5" width="4" height="7" fill="#000" stroke="#38dc38"/>
<rect x="854" y="152" width="1" height="7" fill="#38dc38"/><rect x="854" y="166" width="1" height="4" fill="#38dc38"/><rect x="852" y="159" width="5" height="7" fill="#38dc38"/><rect x="853" y="159" width="3" height="7" fill="#fff"/>
<rect x="862" y="154" width="1" height="16" fill="#38dc38"/><rect x="860" y="164" width="5" height="2" fill="#38dc38"/>
<rect x="870" y="156" width="1" height="7" fill="#38dc38"/><rect x="870" y="168" width="1" height="14" fill="#38dc38"/><rect x="868.5" y="163.5" width="4" height="4" fill="#000" stroke="#38dc38"/>
<rect x="876" y="165" width="1" height="6" fill="#38dc38"/><rect x="879" y="165" width="1" height="6" fill="#38dc38"/>
<rect x="886" y="186" width="1" height="13" fill="#38dc38"/><rect x="884" y="173" width="5" height="13" fill="#38dc38"/><rect x="885" y="173" width="3" height="13" fill="#fff"/>
<rect x="894" y="176" width="1" height="4" fill="#38dc38"/><rect x="894" y="182" width="1" height="6" fill="#38dc38"/><rect x="892.5" y="180.5" width="4" height="1" fill="#000" stroke="#38dc38"/>
<rect x="902" y="174" width="1" height="6" fill="#38dc38"/><rect x="902" y="207" width="1" height="1" fill="#38dc38"/><rect x="900" y="180" width="5" height="27" fill="#38dc38"/><rect x="901" y="180" width="3" height="27" fill="#fff"/>
<rect x="910" y="203" width="1" height="2" fill="#38dc38"/><rect x="910" y="251" width="1" height="3" fill="#38dc38"/><rect x="908" y="205" width="5" height="46" fill="#38dc38"/><rect x="909" y="205" width="3" height="46" fill="#fff"/>
<rect x="918" y="244" width="1" height="7" fill="#38dc38"/><rect x="918" y="264" width="1" height="4" fill="#38dc38"/><rect x="916" y="251" width="5" height="13" fill="#38dc38"/><rect x="917" y="251" width="3" height="13" fill="#fff"/>
<rect x="926" y="261" width="1" height="4" fill="#38dc38"/><rect x="926" y="310" width="1" height="6" fill="#38dc38"/><rect x="924" y="265" width="5" height="45" fill="#38dc38"/><rect x="925" y="265" width="3" height="45" fill="#fff"/>
<rect x="934" y="288" width="1" height="6" fill="#38dc38"/><rect x="934" y="310" width="1" height="4" fill="#38dc38"/><rect x="932.5" y="294.5" width="4" height="15" fill="#000" stroke="#38dc38"/>
<rect x="942" y="255" width="1" height="3" fill="#38dc38"/><rect x="942" y="296" width="1" height="14" fill="#38dc38"/><rect x="940.5" y="258.5" width="4" height="37" fill="#000" stroke="#38dc38"/>
<rect x="950" y="250" width="1" height="8" fill="#38dc38"/><rect x="948" y="258" width="5" height="8" fill="#38dc38"/><rect x="949" y="258" width="3" height="8" fill="#fff"/>
<rect x="958" y="250" width="1" height="4" fill="#38dc38"/><rect x="956.5" y="254.5" width="4" height="9" fill="#000" stroke="#38dc38"/>
<rect x="966" y="248" width="1" height="4" fill="#38dc38"/><rect x="966" y="274" width="1" height="2" fill="#38dc38"/><rect x="964" y="252" width="5" height="22" fill="#38dc38"/><rect x="965" y="252" width="3" height="22" fill="#fff"/>
<rect x="974" y="277" width="1" height="1" fill="#38dc38"/><rect x="974" y="288" width="1" height="3" fill="#38dc38"/><rect x="972" y="278" width="5" height="10" fill="#38dc38"/><rect x="973" y="278" width="3" height="10" fill="#fff"/>
<rect x="982" y="284" width="1" height="3" fill="#38dc38"/><rect x="982" y="292" width="1" height="2" fill="#38dc38"/><rect x="980" y="287" width="5" height="5" fill="#38dc38"/><rect x="981" y="287" width="3" height="5" fill="#fff"/>
<rect x="988" y="290" width="5" height="36" fill="#38dc38"/><rect x="989" y="290" width="3" height="36" fill="#fff"/>
<rect x="998" y="276" width="1" height="12" fill="#38dc38"/><rect x="998" y="324" width="1" height="2" fill="#38dc38"/><rect x="996.5" y="288.5" width="4" height="35" fill="#000" stroke="#38dc38"/>
<rect x="1006" y="288" width="1" height="1" fill="#38dc38"/><rect x="1004" y="289" width="5" height="15" fill="#38dc38"/><rect x="1005" y="289" width="3" height="15" fill="#fff"/>
<rect x="1014" y="283" width="1" height="13" fill="#38dc38"/><rect x="1012.5" y="296.5" width="4" height="5" fill="#000" stroke="#38dc38"/>
<rect x="1022" y="280" width="1" height="4" fill="#38dc38"/><rect x="1022" y="294" width="1" height="10" fill="#38dc38"/><rect x="1020.5" y="284.5" width="4" height="9" fill="#000" stroke="#38dc38"/>
<rect x="1030" y="319" width="1" height="1" fill="#38dc38"/><rect x="1030" y="329" width="1" height="3" fill="#38dc38"/><rect x="1028.5" y="320.5" width="4" height="8" fill="#000" stroke="#38dc38"/>
<rect x="1038" y="320" width="1" height="4" fill="#38dc38"/><rect x="1036" y="320" width="5" height="1" fill="#38dc38"/>
<rect x="1044.5" y="316.5" width="4" height="4" fill="#000" stroke="#38dc38"/>
<rect x="1054" y="316" width="1" height="7" fill="#38dc38"/><rect x="1052.5" y="314.5" width="4" height="1" fill="#000" stroke="#38dc38"/>
<rect x="1060.5" y="311.5" width="4" height="3" fill="#000" stroke="#38dc38"/>
<rect x="1070" y="318" width="1" height="5" fill="#38dc38"/><rect x="1068" y="312" width="5" height="6" fill="#38dc38"/><rect x="1069" y="312" width="3" height="6" fill="#fff"/>
<rect x="1078" y="314" width="1" height="9" fill="#38dc38"/><rect x="1076" y="318" width="5" height="2" fill="#38dc38"/>
<rect x="1084.5" y="310.5" width="4" height="8" fill="#000" stroke="#38dc38"/>
<rect x="1094" y="305" width="1" height="6" fill="#38dc38"/><rect x="1092" y="310" width="5" height="1" fill="#38dc38"/>
<rect x="1100" y="310" width="5" height="8" fill="#38dc38"/><rect x="1101" y="310" width="3" height="8" fill="#fff"/>
<rect x="1110" y="322" width="1" height="9" fill="#38dc38"/><rect x="1108.5" y="316.5" width="4" height="5" fill="#000" stroke="#38dc38"/>
<rect x="1118" y="304" width="1" height="14" fill="#38dc38"/><rect x="1118" y="322" width="1" height="16" fill="#38dc38"/><rect x="1116" y="318" width="5" height="4" fill="#38dc38"/><rect x="1117" y="318" width="3" height="4" fill="#fff"/>
<rect x="1126" y="304" width="1" height="18" fill="#38dc38"/><rect x="1126" y="326" width="1" height="2" fill="#38dc38"/><rect x="1124.5" y="322.5" width="4" height="3" fill="#000" stroke="#38dc38"/>
<rect x="1134" y="301" width="1" height="4" fill="#38dc38"/><rect x="1132.5" y="305.5" width="4" height="16" fill="#000" stroke="#38dc38"/>
<rect x="1142" y="301" width="1" height="1" fill="#38dc38"/><rect x="1142" y="310" width="1" height="2" fill="#38dc38"/><rect x="1140" y="302" width="5" height="8" fill="#38dc38"/><rect x="1141" y="302" width="3" height="8" fill="#fff"/>
<rect x="1150" y="300" width="1" height="5" fill="#38dc38"/><rect x="1150" y="308" width="1" height="4" fill="#38dc38"/><rect x="1148.5" y="305.5" width="4" height="2" fill="#000" stroke="#38dc38"/>
<rect x="1158" y="294" width="1" height="6" fill="#38dc38"/><rect x="1158" y="310" width="1" height="2" fill="#38dc38"/><rect x="1156.5" y="300.5" width="4" height="9" fill="#000" stroke="#38dc38"/>
<rect x="1166" y="299" width="1" height="5" fill="#38dc38"/><rect x="1164" y="304" width="5" height="5" fill="#38dc38"/><rect x="1165" y="304" width="3" height="5" fill="#fff"/>
<rect x="1174" y="309" width="1" height="1" fill="#38dc38"/><rect x="1174" y="319" width="1" height="5" fill="#38dc38"/><rect x="1172" y="310" width="5" height="9" fill="#38dc38"/><rect x="1173" y="310" width="3" height="9" fill="#fff"/>
<rect x="1182" y="318" width="1" height="4" fill="#38dc38"/><rect x="1180" y="322" width="5" height="10" fill="#38dc38"/><rect x="1181" y="322" width="3" height="10" fill="#fff"/>
<rect x="1190" y="342" width="1" height="4" fill="#38dc38"/><rect x="1188" y="332" width="5" height="10" fill="#38dc38"/><rect x="1189" y="332" width="3" height="10" fill="#fff"/>
<rect x="1198" y="330" width="1" height="14" fill="#38dc38"/><rect x="1196" y="339" width="5" height="1" fill="#38dc38"/>
<rect x="1206" y="336" width="1" height="2" fill="#38dc38"/><rect x="1204.5" y="338.5" width="4" height="3" fill="#000" stroke="#38dc38"/>
<rect x="1212" y="338" width="5" height="4" fill="#38dc38"/><rect x="1213" y="338" width="3" height="4" fill="#fff"/>
<rect x="1222" y="335" width="1" height="11" fill="#38dc38"/><rect x="1220" y="342" width="5" height="1" fill="#38dc38"/>
<rect x="1230" y="330" width="1" height="3" fill="#38dc38"/><rect x="1228.5" y="333.5" width="4" height="8" fill="#000" stroke="#38dc38"/>
<rect x="1236.5" y="320.5" width="4" height="13" fill="#000" stroke="#38dc38"/>
<rect x="1244.5" y="315.5" width="4" height="6" fill="#000" stroke="#38dc38"/>
<rect x="1254" y="311" width="1" height="1" fill="#38dc38"/><rect x="1254" y="343" width="1" height="1" fill="#38dc38"/><rect x="1252" y="312" width="5" height="31" fill="#38dc38"/><rect x="1253" y="312" width="3" height="31" fill="#fff"/>
<rect x="1262" y="338" width="1" height="5" fill="#38dc38"/><rect x="1260" y="340" width="5" height="2" fill="#38dc38"/>
<rect x="1270" y="339" width="1" height="2" fill="#38dc38"/><rect x="1268.5" y="341.5" width="4" height="4" fill="#000" stroke="#38dc38"/>
<rect x="1278" y="342" width="1" height="5" fill="#38dc38"/><rect x="1276.5" y="332.5" width="4" height="9" fill="#000" stroke="#38dc38"/>
<rect x="1286" y="326" width="1" height="3" fill="#38dc38"/><rect x="1286" y="338" width="1" height="4" fill="#38dc38"/><rect x="1284" y="329" width="5" height="9" fill="#38dc38"/><rect x="1285" y="329" width="3" height="9" fill="#fff"/>
<rect x="1294" y="302" width="1" height="6" fill="#38dc38"/><rect x="1294" y="338" width="1" height="21" fill="#38dc38"/><rect x="1292.5" y="308.5" width="4" height="29" fill="#000" stroke="#38dc38"/>
<rect x="1302" y="248" width="1" height="2" fill="#38dc38"/><rect x="1300.5" y="250.5" width="4" height="55" fill="#000" stroke="#38dc38"/>
<rect x="1310" y="252" width="1" height="12" fill="#38dc38"/><rect x="1308.5" y="217.5" width="4" height="34" fill="#000" stroke="#38dc38"/>
<rect x="1318" y="204" width="1" height="8" fill="#38dc38"/><rect x="1318" y="252" width="1" height="2" fill="#38dc38"/><rect x="1316" y="212" width="5" height="40" fill="#38dc38"/><rect x="1317" y="212" width="3" height="40" fill="#fff"/>
<rect x="1326" y="216" width="1" height="34" fill="#38dc38"/><rect x="1324" y="250" width="5" height="6" fill="#38dc38"/><rect x="1325" y="250" width="3" height="6" fill="#fff"/>
<rect x="1334" y="250" width="1" height="4" fill="#38dc38"/><rect x="1334" y="266" width="1" height="22" fill="#38dc38"/><rect x="1332" y="254" width="5" height="12" fill="#38dc38"/><rect x="1333" y="254" width="3" height="12" fill="#fff"/>
<rect x="1342" y="234" width="1" height="2" fill="#38dc38"/><rect x="1342" y="266" width="1" height="18" fill="#38dc38"/><rect x="1340.5" y="236.5" width="4" height="29" fill="#000" stroke="#38dc38"/>
<rect x="1350" y="228" width="1" height="6" fill="#38dc38"/><rect x="1350" y="252" width="1" height="7" fill="#38dc38"/><rect x="1348" y="234" width="5" height="18" fill="#38dc38"/><rect x="1349" y="234" width="3" height="18" fill="#fff"/>
<rect x="1358" y="217" width="1" height="32" fill="#38dc38"/><rect x="1358" y="274" width="1" height="14" fill="#38dc38"/><rect x="1356" y="249" width="5" height="25" fill="#38dc38"/><rect x="1357" y="249" width="3" height="25" fill="#fff"/>
<rect x="1366" y="266" width="1" height="2" fill="#38dc38"/><rect x="1366" y="272" width="1" height="28" fill="#38dc38"/><rect x="1364.5" y="268.5" width="4" height="3" fill="#000" stroke="#38dc38"/>
<rect x="1374" y="234" width="1" height="32" fill="#38dc38"/><rect x="1372.5" y="266.5" width="4" height="1" fill="#000" stroke="#38dc38"/>
<rect x="1382" y="241" width="1" height="23" fill="#38dc38"/><rect x="1380" y="264" width="5" height="8" fill="#38dc38"/><rect x="1381" y="264" width="3" height="8" fill="#fff"/>
<rect x="1390" y="216" width="1" height="70" fill="#38dc38"/><rect x="1388" y="272" width="5" height="1" fill="#38dc38"/>
<rect x="1398" y="230" width="1" height="48" fill="#38dc38"/><rect x="1398" y="284" width="1" height="12" fill="#38dc38"/><rect x="1396" y="278" width="5" height="6" fill="#38dc38"/><rect x="1397" y="278" width="3" height="6" fill="#fff"/>
<rect x="1406" y="266" width="1" height="22" fill="#38dc38"/><rect x="1406" y="297" width="1" height="2" fill="#38dc38"/><rect x="1404" y="288" width="5" height="9" fill="#38dc38"/><rect x="1405" y="288" width="3" height="9" fill="#fff"/>
<rect x="1414" y="284" width="1" height="4" fill="#38dc38"/><rect x="1414" y="296" width="1" height="18" fill="#38dc38"/><rect x="1412.5" y="288.5" width="4" height="7" fill="#000" stroke="#38dc38"/>
<rect x="1422" y="284" width="1" height="4" fill="#38dc38"/><rect x="1422" y="299" width="1" height="13" fill="#38dc38"/><rect x="1420" y="288" width="5" height="11" fill="#38dc38"/><rect x="1421" y="288" width="3" height="11" fill="#fff"/>
<rect x="1430" y="280" width="1" height="8" fill="#38dc38"/><rect x="1430" y="296" width="1" height="16" fill="#38dc38"/><rect x="1428.5" y="288.5" width="4" height="7" fill="#000" stroke="#38dc38"/>
<rect x="1438" y="276" width="1" height="13" fill="#38dc38"/><rect x="1438" y="304" width="1" height="2" fill="#38dc38"/><rect x="1436" y="289" width="5" height="15" fill="#38dc38"/><rect x="1437" y="289" width="3" height="15" fill="#fff"/>
<rect x="1446" y="336" width="1" height="14" fill="#38dc38"/><rect x="1444" y="304" width="5" height="32" fill="#38dc38"/><rect x="1445" y="304" width="3" height="32" fill="#fff"/>
<rect x="1454" y="328" width="1" height="8" fill="#38dc38"/><rect x="1454" y="342" width="1" height="13" fill="#38dc38"/><rect x="1452" y="336" width="5" height="6" fill="#38dc38"/><rect x="1453" y="336" width="3" height="6" fill="#fff"/>
<rect x="1462" y="344" width="1" height="7" fill="#38dc38"/><rect x="1460" y="344" width="5" height="3" fill="#38dc38"/>
<path d="M368.4 379.6 h2.8 v-2.3 l4.2 4.2 l-4.2 4.2 v-2.3 h-2.8 z" fill="#0808d8" stroke="#fff" stroke-width="1" stroke-linejoin="miter" shape-rendering="auto"/>
<path d="M944.4 245.6 h2.8 v-2.3 l4.2 4.2 l-4.2 4.2 v-2.3 h-2.8 z" fill="#0808d8" stroke="#fff" stroke-width="1" stroke-linejoin="miter" shape-rendering="auto"/>
<path d="M1456.9 332.6 h2.8 v-2.3 l4.2 4.2 l-4.2 4.2 v-2.3 h-2.8 z" fill="#0808d8" stroke="#fff" stroke-width="1" stroke-linejoin="miter" shape-rendering="auto"/>
<path d="M736.6999999999999 173.6 h2.8 v-2.3 l4.2 4.2 l-4.2 4.2 v-2.3 h-2.8 z" fill="#e01010" stroke="#fff" stroke-width="1" stroke-linejoin="miter" shape-rendering="auto"/>
<path d="M133.5 78 V657 M133 78.5 H1815 M1814.5 78 V657 M133 656.5 H1815" stroke="#fff" fill="none"/>
<path d="M1472 79 H1481.5 L1476.7 84 Z" fill="#b2b6c0" shape-rendering="auto"/>
<g fill="#fff">
<rect x="1815" y="98" width="2" height="1"/><text x="1820.5" y="101.2" font-size="9">1.16695</text>
<rect x="1815" y="134" width="2" height="1"/><text x="1820.5" y="137.2" font-size="9">1.16665</text>
<rect x="1815" y="171" width="2" height="1"/><text x="1820.5" y="174.2" font-size="9">1.16635</text>
<rect x="1815" y="208" width="2" height="1"/><text x="1820.5" y="211.2" font-size="9">1.16605</text>
<rect x="1815" y="245" width="2" height="1"/><text x="1820.5" y="248.2" font-size="9">1.16575</text>
<rect x="1815" y="281" width="2" height="1"/><text x="1820.5" y="284.2" font-size="9">1.16545</text>
<rect x="1815" y="318" width="2" height="1"/><text x="1820.5" y="321.2" font-size="9">1.16515</text>
<rect x="1815" y="355" width="2" height="1"/><text x="1820.5" y="358.2" font-size="9">1.16485</text>
<rect x="1815" y="392" width="2" height="1"/><text x="1820.5" y="395.2" font-size="9">1.16455</text>
<rect x="1815" y="428" width="2" height="1"/><text x="1820.5" y="431.2" font-size="9">1.16425</text>
<rect x="1815" y="465" width="2" height="1"/><text x="1820.5" y="468.2" font-size="9">1.16395</text>
<rect x="1815" y="502" width="2" height="1"/><text x="1820.5" y="505.2" font-size="9">1.16365</text>
<rect x="1815" y="538" width="2" height="1"/><text x="1820.5" y="541.2" font-size="9">1.16335</text>
<rect x="1815" y="575" width="2" height="1"/><text x="1820.5" y="578.2" font-size="9">1.16305</text>
<rect x="1815" y="612" width="2" height="1"/><text x="1820.5" y="615.2" font-size="9">1.16275</text>
<rect x="1815" y="649" width="2" height="1"/><text x="1820.5" y="652.2" font-size="9">1.16245</text>
</g>
<rect x="1816" y="342" width="40" height="11" fill="#fff"/><text x="1821" y="350.7" fill="#000" font-size="9">1.16492</text>
<g fill="#fff">
<rect x="134" y="657" width="1" height="3"/><text x="132.5" y="669">28 Oct 2025</text>
<rect x="198" y="657" width="1" height="3"/><text x="196.5" y="669">28 Oct 14:20</text>
<rect x="262" y="657" width="1" height="3"/><text x="260.5" y="669">28 Oct 15:00</text>
<rect x="326" y="657" width="1" height="3"/><text x="324.5" y="669">28 Oct 15:40</text>
<rect x="390" y="657" width="1" height="3"/><text x="388.5" y="669">28 Oct 16:20</text>
<rect x="454" y="657" width="1" height="3"/><text x="452.5" y="669">28 Oct 17:00</text>
<rect x="518" y="657" width="1" height="3"/><text x="516.5" y="669">28 Oct 17:40</text>
<rect x="582" y="657" width="1" height="3"/><text x="580.5" y="669">28 Oct 18:20</text>
<rect x="646" y="657" width="1" height="3"/><text x="644.5" y="669">28 Oct 19:00</text>
<rect x="710" y="657" width="1" height="3"/><text x="708.5" y="669">28 Oct 19:40</text>
<rect x="774" y="657" width="1" height="3"/><text x="772.5" y="669">28 Oct 20:20</text>
<rect x="838" y="657" width="1" height="3"/><text x="836.5" y="669">28 Oct 21:00</text>
<rect x="902" y="657" width="1" height="3"/><text x="900.5" y="669">28 Oct 21:40</text>
<rect x="966" y="657" width="1" height="3"/><text x="964.5" y="669">28 Oct 22:20</text>
<rect x="1030" y="657" width="1" height="3"/><text x="1028.5" y="669">28 Oct 23:05</text>
<rect x="1094" y="657" width="1" height="3"/><text x="1092.5" y="669">28 Oct 23:45</text>
<rect x="1158" y="657" width="1" height="3"/><text x="1156.5" y="669">29 Oct 00:25</text>
<rect x="1222" y="657" width="1" height="3"/><text x="1220.5" y="669">29 Oct 01:05</text>
<rect x="1286" y="657" width="1" height="3"/><text x="1284.5" y="669">29 Oct 01:45</text>
<rect x="1350" y="657" width="1" height="3"/><text x="1348.5" y="669">29 Oct 02:25</text>
<rect x="1414" y="657" width="1" height="3"/><text x="1412.5" y="669">29 Oct 03:05</text>
</g>
<path d="M137 84 h8 l-4 4.5 z" fill="#fff" shape-rendering="auto"/>
<text x="148.5" y="90" fill="#fff">EURUSD,M5</text>
<clipPath id="tc"><rect x="200" y="80" width="150" height="14"/></clipPath><text x="210.3" y="90" fill="#fff" clip-path="url(#tc)" textLength="140.6" lengthAdjust="spacing">1.16494 1.16494 1.16489 1.16492</text>
<text x="1664.7" y="91" fill="#fff" textLength="129.7" lengthAdjust="spacingAndGlyphs">Hype TrendProEA MT4_1443+</text>
<g shape-rendering="auto" stroke="#fff" fill="none"><circle cx="1803.5" cy="88.5" r="5"/><path d="M1800.8 89.8 q2.7 2.8 5.4 0" stroke-width="1"/></g><rect x="1801" y="86" width="1.4" height="2" fill="#fff"/><rect x="1804.6" y="86" width="1.4" height="2" fill="#fff"/>
</svg>
<div class="a" style="left:131px;top:678px;width:1731px;height:1px;background:#fff"></div>
<div class="a" style="left:131px;top:679px;width:1731px;height:1px;background:#000"></div>
<div class="a" style="left:135px;top:678px;width:80px;height:20px;box-sizing:border-box;background:#fff;border:1px solid #000;border-top:none"></div>
<div class="t" style="left:145.5px;top:682px;letter-spacing:-.8px">EURUSD,M5</div>
<div class="t" style="left:225.5px;top:682px;letter-spacing:-.8px;color:#555">XAUUSD,M5</div>
<div class="a" style="left:295px;top:682px;width:1px;height:14px;background:#404040"></div>
<svg style="left:1826px;top:683px" width="30" height="10" viewBox="0 0 30 10"><path d="M7.2 2 L3.8 5 L7.2 8 Z M23 2 L26.4 5 L23 8 Z" fill="#a4a4a4"/></svg>
<div class="a" style="left:0;top:699px;width:1862px;height:2px;background:#fff"></div>
<div class="a" style="left:0;top:703px;width:1858px;height:204px;background:#fff"></div>
<div class="a" style="left:1858px;top:702px;width:7px;height:205px;background:#fff"></div><div class="a" style="left:1858px;top:721px;width:1px;height:185px;background:#c4c4c4"></div><div class="a" style="left:1861px;top:702px;width:1px;height:204px;background:#c4c4c4"></div>
<div class="hdr" style="left:-40px;top:704px;height:16px;width:137px;background:#d4d0c8"></div>
<div class="hdr" style="left:97px;top:704px;height:16px;width:238px;background:#d4d0c8"></div>
<div class="t r" style="right:1537px;top:707px;letter-spacing:-.35px">Time</div>
<div class="hdr" style="left:335px;top:704px;height:16px;width:107px;background:#d4d0c8"></div>
<div class="t r" style="right:1430px;top:707px;letter-spacing:-.35px">Type</div>
<div class="hdr" style="left:442px;top:704px;height:16px;width:86px;background:#d4d0c8"></div>
<div class="t r" style="right:1344px;top:707px;letter-spacing:-.35px">Size</div>
<div class="hdr" style="left:528px;top:704px;height:16px;width:107px;background:#d4d0c8"></div>
<div class="t r" style="right:1237px;top:707px;letter-spacing:-.35px">Symbol</div>
<div class="hdr" style="left:635px;top:704px;height:16px;width:107px;background:#d4d0c8"></div>
<div class="t r" style="right:1130px;top:707px;letter-spacing:-.35px">Price</div>
<div class="hdr" style="left:742px;top:704px;height:16px;width:107px;background:#d4d0c8"></div>
<div class="t r" style="right:1023px;top:707px;letter-spacing:-.35px">S / L</div>
<div class="hdr" style="left:849px;top:704px;height:16px;width:107px;background:#d4d0c8"></div>
<div class="t r" style="right:916px;top:707px;letter-spacing:-.35px">T / P</div>
<div class="hdr" style="left:956px;top:704px;height:16px;width:237px;background:#d4d0c8"></div>
<div class="t r" style="right:679px;top:707px;letter-spacing:-.35px">Time</div>
<div class="hdr" style="left:1193px;top:704px;height:16px;width:107px;background:#d4d0c8"></div>
<div class="t r" style="right:572px;top:707px;letter-spacing:-.35px">Price</div>
<div class="hdr" style="left:1300px;top:704px;height:16px;width:107px;background:#d4d0c8"></div>
<div class="t r" style="right:465px;top:707px;letter-spacing:-.35px">Swap</div>
<div class="hdr" style="left:1407px;top:704px;height:16px;width:117px;background:#d4d0c8"></div>
<div class="t r" style="right:348px;top:707px;letter-spacing:-.35px">Profit</div>
<div class="hdr" style="left:1524px;top:704px;height:16px;width:334px;background:#d4d0c8"></div>
<div class="t r" style="right:34px;top:707px;letter-spacing:-.35px">Comment</div>
<svg style="left:1843px;top:708px" width="10" height="9" viewBox="0 0 10 9"><path d="M1 8 L5 1 L9 8 Z" fill="#fbfbf8" stroke="#9c9c98" stroke-width=".9"/></svg>
<div class="a" style="left:0;top:720px;width:1858px;height:1px;background:#404040"></div>
<div class="a" style="left:0;top:721px;width:1858px;height:20px;background:#fff"></div>
<div class="a" style="left:849px;top:722px;width:104px;height:18px;background:#5cee5c"></div>
<div class="t" style="left:-21px;top:725px;">1071999114</div>
<div class="t r" style="right:1534px;top:725px;letter-spacing:.12px">2025.10.28 09:10:00</div>
<div class="t r" style="right:1428px;top:725px;">buy</div>
<div class="t r" style="right:1342px;top:725px;">0.01</div>
<div class="t r" style="right:1235px;top:725px;">eurusd</div>
<div class="t r" style="right:1128px;top:725px;">1.16572</div>
<div class="t r" style="right:1021px;top:725px;">0.00000</div>
<div class="t r" style="right:914px;top:725px;">1.16622</div>
<div class="t r" style="right:676px;top:725px;letter-spacing:.12px">2025.10.28 10:32:26</div>
<div class="t r" style="right:570px;top:725px;">1.16622</div>
<div class="t r" style="right:463px;top:725px;">0.00</div>
<div class="t r" style="right:346px;top:725px;">0.50</div>
<div class="t r" style="right:12px;top:725px;">HypeTrendPro[tp]</div>
<div class="a" style="left:0;top:740px;width:1858px;height:1px;background:#d0d0d0"></div>
<div class="a" style="left:0;top:741px;width:1858px;height:20px;background:#ececec"></div>
<div class="a" style="left:849px;top:742px;width:104px;height:18px;background:#5cee5c"></div>
<div class="t" style="left:-21px;top:745px;">1072055007</div>
<div class="t r" style="right:1534px;top:745px;letter-spacing:.12px">2025.10.28 11:55:00</div>
<div class="t r" style="right:1428px;top:745px;">buy</div>
<div class="t r" style="right:1342px;top:745px;">0.01</div>
<div class="t r" style="right:1235px;top:745px;">eurusd</div>
<div class="t r" style="right:1128px;top:745px;">1.16575</div>
<div class="t r" style="right:1021px;top:745px;">0.00000</div>
<div class="t r" style="right:914px;top:745px;">1.16625</div>
<div class="t r" style="right:676px;top:745px;letter-spacing:.12px">2025.10.28 12:40:47</div>
<div class="t r" style="right:570px;top:745px;">1.16625</div>
<div class="t r" style="right:463px;top:745px;">0.00</div>
<div class="t r" style="right:346px;top:745px;">0.50</div>
<div class="t r" style="right:12px;top:745px;">HypeTrendPro[tp]</div>
<div class="a" style="left:0;top:760px;width:1858px;height:1px;background:#d0d0d0"></div>
<div class="a" style="left:0;top:761px;width:1858px;height:20px;background:#fff"></div>
<div class="a" style="left:849px;top:762px;width:104px;height:18px;background:#5cee5c"></div>
<div class="t" style="left:-21px;top:765px;">1072072347</div>
<div class="t r" style="right:1534px;top:765px;letter-spacing:.12px">2025.10.28 13:00:00</div>
<div class="t r" style="right:1428px;top:765px;">sell</div>
<div class="t r" style="right:1342px;top:765px;">0.01</div>
<div class="t r" style="right:1235px;top:765px;">eurusd</div>
<div class="t r" style="right:1128px;top:765px;">1.16641</div>
<div class="t r" style="right:1021px;top:765px;">0.00000</div>
<div class="t r" style="right:914px;top:765px;">1.16591</div>
<div class="t r" style="right:676px;top:765px;letter-spacing:.12px">2025.10.28 13:11:45</div>
<div class="t r" style="right:570px;top:765px;">1.16591</div>
<div class="t r" style="right:463px;top:765px;">0.00</div>
<div class="t r" style="right:346px;top:765px;">0.50</div>
<div class="t r" style="right:12px;top:765px;">HypeTrendPro[tp]</div>
<div class="a" style="left:0;top:780px;width:1858px;height:1px;background:#d0d0d0"></div>
<div class="a" style="left:0;top:781px;width:1858px;height:20px;background:#ececec"></div>
<div class="a" style="left:849px;top:782px;width:104px;height:18px;background:#5cee5c"></div>
<div class="t" style="left:-21px;top:785px;">1072079056</div>
<div class="t r" style="right:1534px;top:785px;letter-spacing:.12px">2025.10.28 13:25:00</div>
<div class="t r" style="right:1428px;top:785px;">sell</div>
<div class="t r" style="right:1342px;top:785px;">0.01</div>
<div class="t r" style="right:1235px;top:785px;">eurusd</div>
<div class="t r" style="right:1128px;top:785px;">1.16566</div>
<div class="t r" style="right:1021px;top:785px;">0.00000</div>
<div class="t r" style="right:914px;top:785px;">1.16516</div>
<div class="t r" style="right:676px;top:785px;letter-spacing:.12px">2025.10.28 14:15:59</div>
<div class="t r" style="right:570px;top:785px;">1.16516</div>
<div class="t r" style="right:463px;top:785px;">0.00</div>
<div class="t r" style="right:346px;top:785px;">0.50</div>
<div class="t r" style="right:12px;top:785px;">HypeTrendPro[tp]</div>
<div class="a" style="left:0;top:800px;width:1858px;height:1px;background:#d0d0d0"></div>
<div class="a" style="left:0;top:801px;width:1858px;height:20px;background:#fff"></div>
<div class="a" style="left:849px;top:802px;width:104px;height:18px;background:#5cee5c"></div>
<div class="t" style="left:-21px;top:805px;">1072137120</div>
<div class="t r" style="right:1534px;top:805px;letter-spacing:.12px">2025.10.28 16:10:01</div>
<div class="t r" style="right:1428px;top:805px;">buy</div>
<div class="t r" style="right:1342px;top:805px;">0.01</div>
<div class="t r" style="right:1235px;top:805px;">eurusd</div>
<div class="t r" style="right:1128px;top:805px;">1.16464</div>
<div class="t r" style="right:1021px;top:805px;">0.00000</div>
<div class="t r" style="right:914px;top:805px;">1.16514</div>
<div class="t r" style="right:676px;top:805px;letter-spacing:.12px">2025.10.28 16:20:10</div>
<div class="t r" style="right:570px;top:805px;">1.16514</div>
<div class="t r" style="right:463px;top:805px;">0.00</div>
<div class="t r" style="right:346px;top:805px;">0.50</div>
<div class="t r" style="right:12px;top:805px;">HypeTrendPro[tp]</div>
<div class="a" style="left:0;top:820px;width:1858px;height:1px;background:#d0d0d0"></div>
<div class="a" style="left:0;top:821px;width:1858px;height:20px;background:#ececec"></div>
<div class="a" style="left:849px;top:822px;width:104px;height:18px;background:#5cee5c"></div>
<div class="t" style="left:-21px;top:825px;">1072212205</div>
<div class="t r" style="right:1534px;top:825px;letter-spacing:.12px">2025.10.28 20:00:00</div>
<div class="t r" style="right:1428px;top:825px;">sell</div>
<div class="t r" style="right:1342px;top:825px;">0.01</div>
<div class="t r" style="right:1235px;top:825px;">eurusd</div>
<div class="t r" style="right:1128px;top:825px;">1.16632</div>
<div class="t r" style="right:1021px;top:825px;">0.00000</div>
<div class="t r" style="right:914px;top:825px;">1.16582</div>
<div class="t r" style="right:676px;top:825px;letter-spacing:.12px">2025.10.28 20:30:28</div>
<div class="t r" style="right:570px;top:825px;">1.16582</div>
<div class="t r" style="right:463px;top:825px;">0.00</div>
<div class="t r" style="right:346px;top:825px;">0.50</div>
<div class="t r" style="right:12px;top:825px;">HypeTrendPro[tp]</div>
<div class="a" style="left:0;top:840px;width:1858px;height:1px;background:#d0d0d0"></div>
<div class="t" style="left:-21px;top:845px;">1071649028</div>
<div class="t r" style="right:1534px;top:845px;letter-spacing:.12px">2025.10.27 11:00:56</div>
<div class="t r" style="right:1428px;top:845px;">balance</div>
<div class="t r" style="right:346px;top:845px;">1 000.00</div>
<div class="t r" style="right:12px;top:845px;">Starting balance</div>
<div class="a" style="left:96px;top:721px;width:1px;height:140px;background:#c8c8c8"></div>
<div class="a" style="left:334px;top:721px;width:1px;height:140px;background:#c8c8c8"></div>
<div class="a" style="left:441px;top:721px;width:1px;height:140px;background:#c8c8c8"></div>
<div class="a" style="left:527px;top:721px;width:1px;height:120px;background:#c8c8c8"></div>
<div class="a" style="left:634px;top:721px;width:1px;height:120px;background:#c8c8c8"></div>
<div class="a" style="left:741px;top:721px;width:1px;height:120px;background:#c8c8c8"></div>
<div class="a" style="left:848px;top:721px;width:1px;height:120px;background:#c8c8c8"></div>
<div class="a" style="left:955px;top:721px;width:1px;height:120px;background:#c8c8c8"></div>
<div class="a" style="left:1192px;top:721px;width:1px;height:120px;background:#c8c8c8"></div>
<div class="a" style="left:1299px;top:721px;width:1px;height:120px;background:#c8c8c8"></div>
<div class="a" style="left:1406px;top:721px;width:1px;height:140px;background:#c8c8c8"></div>
<div class="a" style="left:1523px;top:721px;width:1px;height:140px;background:#c8c8c8"></div>
<div class="a" style="left:1857px;top:721px;width:1px;height:160px;background:#c8c8c8"></div>
<div class="a" style="left:0;top:861px;width:1858px;height:20px;background:#c8c8c8"></div>
<div class="t r" style="right:1522px;top:865px;font-weight:bold;letter-spacing:.4px">Profit/Loss: 3.00  Credit: 0.00  Deposit: 1 000.00  Withdrawal: 0.00</div>
<div class="t r" style="right:343.5px;top:865px;font-weight:bold;letter-spacing:.6px">1 003.00</div>
<div class="a" style="left:0;top:907px;width:1865px;height:11px;background:#f0f0f0"></div>
<div class="a" style="left:70px;top:914px;width:1775px;height:2px;background:#868686"></div>
<svg style="left:1560px;top:760px" width="190" height="95" viewBox="1560 760 190 95" font-family="Liberation Sans, sans-serif" font-weight="bold"><defs><linearGradient id="lg" gradientUnits="userSpaceOnUse" x1="0" y1="769" x2="0" y2="825"><stop offset="0" stop-color="#2ba6f5"/><stop offset="1" stop-color="#1266d2"/></linearGradient><linearGradient id="lr" gradientUnits="userSpaceOnUse" x1="1702" y1="770" x2="1736" y2="824"><stop offset="0" stop-color="#f86868"/><stop offset=".55" stop-color="#d21a1a"/><stop offset="1" stop-color="#f46464"/></linearGradient><clipPath id="lc"><rect x="1560" y="760" width="190" height="66"/></clipPath></defs><g clip-path="url(#lc)" stroke-linejoin="round"><text x="1573.2" y="820.8" font-size="70.5" fill="url(#lg)" stroke="url(#lg)" stroke-width="5" textLength="131.5" lengthAdjust="spacingAndGlyphs">MQL</text><text x="1703.7" y="821.5" font-size="69.5" fill="url(#lr)" stroke="url(#lr)" stroke-width="3.5" textLength="31" lengthAdjust="spacingAndGlyphs">5</text></g><text x="1574.3" y="845.4" font-size="19.5" fill="#0a0a0a" letter-spacing="9.25">CRACKED</text></svg>
</body></html>
